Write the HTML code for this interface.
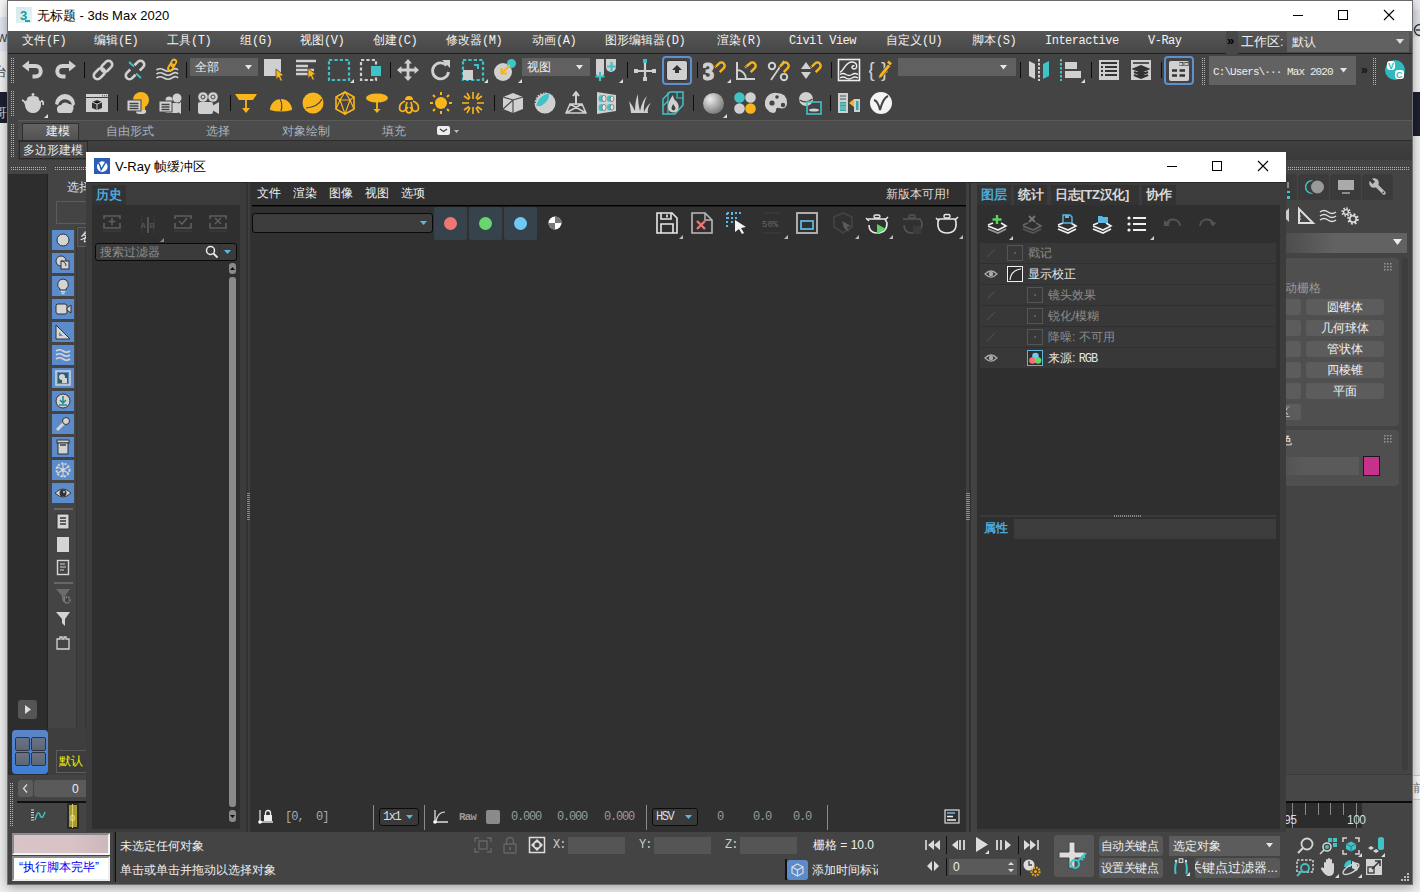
<!DOCTYPE html>
<html><head><meta charset="utf-8">
<style>
*{margin:0;padding:0;box-sizing:border-box}
html,body{width:1420px;height:892px;overflow:hidden;background:#f0f0f0;font-family:"Liberation Sans",sans-serif;position:relative}
.a{position:absolute}
.t{position:absolute;white-space:nowrap;line-height:20px;height:20px}
.m{font-family:'Liberation Mono',monospace;font-size:12px;letter-spacing:-0.5px}
</style></head><body>
<div class="a" style="left:0px;top:0px;width:8px;height:17px;background:#f7f7f7;"></div>
<div class="a" style="left:0px;top:17px;width:8px;height:34px;background:#e2e5ef;"></div>
<div class="t" style="left:-3px;top:28px;font-size:11px;color:#333;font-family:'Liberation Sans',sans-serif;">W.</div>
<div class="a" style="left:0px;top:51px;width:8px;height:41px;background:#f0f0f0;"></div>
<div class="t" style="left:-6px;top:62px;font-size:13px;color:#444;font-family:'Liberation Sans',sans-serif;">台</div>
<div class="a" style="left:0px;top:92px;width:8px;height:31px;background:#1c2030;"></div>
<div class="t" style="left:-6px;top:103px;font-size:13px;color:#ddd;font-family:'Liberation Sans',sans-serif;">哥</div>
<div class="a" style="left:0px;top:123px;width:8px;height:769px;background:#eeeeee;"></div>
<div class="a" style="left:1412px;top:0px;width:8px;height:10px;background:#ececf0;"></div>
<div class="a" style="left:1412px;top:10px;width:8px;height:27px;background:#dfe2ea;"></div>
<svg class="a" style="left:1412px;top:23px;" width="8" height="14" viewBox="0 0 8 14"><circle cx="8" cy="7" r="5.5" stroke="#333" stroke-width="1.4" fill="none"/><path d="M4 7H8" stroke="#333" stroke-width="1.4"/></svg>
<div class="a" style="left:1412px;top:37px;width:8px;height:55px;background:#f0f0f0;"></div>
<div class="a" style="left:1412px;top:92px;width:8px;height:44px;background:#1c2030;"></div>
<div class="a" style="left:1412px;top:136px;width:8px;height:756px;background:#eeeeee;"></div>
<div class="a" style="left:1412px;top:775px;width:8px;height:25px;background:#fafafa;border-top:1px solid #ccc;border-bottom:1px solid #ccc"></div>
<div class="t" style="left:1413px;top:778px;font-size:12px;color:#777;font-family:'Liberation Sans',sans-serif;">前</div>
<div class="a" style="left:0px;top:884px;width:1420px;height:8px;background:#eeeeee;"></div>
<div class="a" style="left:7px;top:0px;width:1406px;height:885px;background:#444;border:1px solid #707070;border-top:none;box-shadow:0 2px 10px rgba(0,0,0,.35)"></div>
<div class="a" style="left:8px;top:0px;width:1404px;height:31px;background:#fff;"></div>
<div class="a" style="left:8px;top:31px;width:1404px;height:22px;background:linear-gradient(#565656,#474747);"></div>
<div class="a" style="left:8px;top:53px;width:1404px;height:1px;background:#1e1e1e;"></div>
<div class="a" style="left:7px;top:0px;width:1406px;height:1px;background:#6a6a6a;"></div>
<div class="a" style="left:16px;top:7px;width:16px;height:16px;background:linear-gradient(135deg,#d2eaee,#e6f3f4)"></div>
<svg class="a" style="left:16px;top:7px;" width="16" height="16" viewBox="0 0 16 16"><text x="4" y="12.5" font-family="Liberation Sans" font-weight="bold" font-size="13" fill="#1a9aa0">3</text><rect x="9" y="13" width="5" height="2" fill="#1aa7ad"/></svg>
<div class="t" style="left:37px;top:6px;font-size:13px;color:#000;font-family:'Liberation Sans',sans-serif;">无标题 - 3ds Max 2020</div>
<div class="a" style="left:1293px;top:15px;width:10px;height:1px;background:#000;"></div>
<div class="a" style="left:1338px;top:10px;width:10px;height:10px;background:transparent;border:1px solid #000"></div>
<svg class="a" style="left:1383px;top:9px;" width="12" height="12" viewBox="0 0 12 12"><path d="M1 1L11 11M11 1L1 11" stroke="#000" stroke-width="1.1"/></svg>
<div class="t" style="left:22px;top:30px;font-size:12px;color:#f2f2f2;font-family:'Liberation Sans',sans-serif;">文件<span class="m">(F)</span></div>
<div class="t" style="left:94px;top:30px;font-size:12px;color:#f2f2f2;font-family:'Liberation Sans',sans-serif;">编辑<span class="m">(E)</span></div>
<div class="t" style="left:167px;top:30px;font-size:12px;color:#f2f2f2;font-family:'Liberation Sans',sans-serif;">工具<span class="m">(T)</span></div>
<div class="t" style="left:240px;top:30px;font-size:12px;color:#f2f2f2;font-family:'Liberation Sans',sans-serif;">组<span class="m">(G)</span></div>
<div class="t" style="left:300px;top:30px;font-size:12px;color:#f2f2f2;font-family:'Liberation Sans',sans-serif;">视图<span class="m">(V)</span></div>
<div class="t" style="left:373px;top:30px;font-size:12px;color:#f2f2f2;font-family:'Liberation Sans',sans-serif;">创建<span class="m">(C)</span></div>
<div class="t" style="left:446px;top:30px;font-size:12px;color:#f2f2f2;font-family:'Liberation Sans',sans-serif;">修改器<span class="m">(M)</span></div>
<div class="t" style="left:532px;top:30px;font-size:12px;color:#f2f2f2;font-family:'Liberation Sans',sans-serif;">动画<span class="m">(A)</span></div>
<div class="t" style="left:605px;top:30px;font-size:12px;color:#f2f2f2;font-family:'Liberation Sans',sans-serif;">图形编辑器<span class="m">(D)</span></div>
<div class="t" style="left:717px;top:30px;font-size:12px;color:#f2f2f2;font-family:'Liberation Sans',sans-serif;">渲染<span class="m">(R)</span></div>
<div class="t" style="left:789px;top:30px;font-size:12px;color:#f2f2f2;font-family:'Liberation Sans',sans-serif;"><span class="m">Civil View</span></div>
<div class="t" style="left:886px;top:30px;font-size:12px;color:#f2f2f2;font-family:'Liberation Sans',sans-serif;">自定义<span class="m">(U)</span></div>
<div class="t" style="left:972px;top:30px;font-size:12px;color:#f2f2f2;font-family:'Liberation Sans',sans-serif;">脚本<span class="m">(S)</span></div>
<div class="t" style="left:1045px;top:30px;font-size:12px;color:#f2f2f2;font-family:'Liberation Sans',sans-serif;"><span class="m">Interactive</span></div>
<div class="t" style="left:1148px;top:30px;font-size:12px;color:#f2f2f2;font-family:'Liberation Sans',sans-serif;"><span class="m">V-Ray</span></div>
<div class="a" style="left:1226px;top:31px;width:12px;height:23px;background:#474747;"></div>
<div class="t" style="left:1227px;top:31px;font-size:13px;color:#000;font-family:'Liberation Sans',sans-serif;"><b>»</b></div>
<div class="t" style="left:1241px;top:32px;font-size:12px;color:#f2f2f2;font-family:'Liberation Sans',sans-serif;font-size:12.5px">工作区:</div>
<div class="a" style="left:1287px;top:32px;width:122px;height:20px;background:#616161;"></div>
<div class="t" style="left:1292px;top:32px;font-size:12px;color:#eee;font-family:'Liberation Sans',sans-serif;">默认</div>
<svg class="a" style="left:1396px;top:39px;" width="8" height="6" viewBox="0 0 8 6"><path d="M0 0H8L4 5Z" fill="#ddd"/></svg>
<div class="a" style="left:8px;top:54px;width:1404px;height:66px;background:#444;"></div>
<div class="a" style="left:11px;top:57px;width:3px;height:27px;background-image:linear-gradient(#444 50%,transparent 50%),linear-gradient(90deg,#b4b4b4 1px,#444 1px,#444 2px,#b4b4b4 2px,#b4b4b4 3px);background-size:3px 2px,3px 2px"></div>
<div class="a" style="left:11px;top:90px;width:3px;height:27px;background-image:linear-gradient(#444 50%,transparent 50%),linear-gradient(90deg,#b4b4b4 1px,#444 1px,#444 2px,#b4b4b4 2px,#b4b4b4 3px);background-size:3px 2px,3px 2px"></div>
<div class="a" style="left:11px;top:123px;width:3px;height:35px;background-image:linear-gradient(#444 50%,transparent 50%),linear-gradient(90deg,#b4b4b4 1px,#444 1px,#444 2px,#b4b4b4 2px,#b4b4b4 3px);background-size:3px 2px,3px 2px"></div>
<svg class="a" style="left:21px;top:58px;" width="24" height="24" viewBox="0 0 24 24"><path d="M1 8L8 2.5V13.5Z" fill="#d0d0d0"/><path d="M7 8H14.5A5.2 5.2 0 0 1 14.5 18.5H11.5" stroke="#d0d0d0" stroke-width="4" fill="none"/></svg>
<svg class="a" style="left:53px;top:58px;" width="24" height="24" viewBox="0 0 24 24"><g transform="translate(24,0) scale(-1,1)"><path d="M1 8L8 2.5V13.5Z" fill="#d0d0d0"/><path d="M7 8H14.5A5.2 5.2 0 0 1 14.5 18.5H11.5" stroke="#d0d0d0" stroke-width="4" fill="none"/></g></svg>
<div class="a" style="left:84px;top:62px;width:1px;height:16px;background:#0e0e0e;"></div>
<svg class="a" style="left:91px;top:58px;" width="24" height="24" viewBox="0 0 24 24"><g transform="rotate(-45 12 12)"><rect x="0.5" y="8.3" width="12.5" height="7.4" rx="3.7" stroke="#d0d0d0" stroke-width="2.6" fill="none"/><rect x="11" y="8.3" width="12.5" height="7.4" rx="3.7" stroke="#d0d0d0" stroke-width="2.6" fill="none"/></g></svg>
<svg class="a" style="left:123px;top:58px;" width="24" height="24" viewBox="0 0 24 24"><g transform="rotate(-45 12 12)"><path d="M9 8.3H4.2A3.7 3.7 0 0 0 4.2 15.7H9" stroke="#d0d0d0" stroke-width="2.6" fill="none"/><path d="M15 8.3H19.8A3.7 3.7 0 0 1 19.8 15.7H15" stroke="#d0d0d0" stroke-width="2.6" fill="none"/></g><path d="M6 4L11 8.5M13 15.5L18 20" stroke="#3ec3c6" stroke-width="1.8"/></svg>
<svg class="a" style="left:155px;top:58px;" width="24" height="24" viewBox="0 0 24 24"><path d="M1.5 12Q5 9.5 9 12T17 12T23 12M1.5 16Q5 13.5 9 16T17 16T23 16M1.5 20Q5 17.5 9 20T17 20T23 20" stroke="#d0d0d0" stroke-width="1.7" fill="none"/><g transform="rotate(-60 17 7)"><rect x="11" y="5" width="7" height="4.4" rx="2.2" stroke="#f9b51c" stroke-width="1.8" fill="none"/><rect x="16" y="5" width="7" height="4.4" rx="2.2" stroke="#f9b51c" stroke-width="1.8" fill="none"/></g></svg>
<div class="a" style="left:186px;top:62px;width:1px;height:16px;background:#0e0e0e;"></div>
<div class="a" style="left:190px;top:58px;width:68px;height:18px;background:#606060;"></div>
<div class="t" style="left:195px;top:57px;font-size:12px;color:#eee;font-family:'Liberation Sans',sans-serif;">全部</div>
<svg class="a" style="left:245px;top:65px;" width="7" height="5" viewBox="0 0 7 5"><path d="M0 0H7L3.5 4.5Z" fill="#e6e6e6"/></svg>
<svg class="a" style="left:261px;top:58px;" width="24" height="24" viewBox="0 0 24 24"><rect x="3" y="1" width="17" height="17" fill="#d0d0d0"/><path d="M15 11L23 17.5L19.5 18L21.5 22.5L19.5 23.2L17.5 19L15 21.5Z" fill="#f9b51c" stroke="#444" stroke-width=".8"/></svg>
<svg class="a" style="left:294px;top:58px;" width="24" height="24" viewBox="0 0 24 24"><path d="M2 3H22M2 8H14M2 12H20M2 16H14" stroke="#d0d0d0" stroke-width="2.4"/><path d="M14 10L22 16.5L18.5 17L20.5 21.5L18.5 22.2L16.5 18L14 20.5Z" fill="#f9b51c" stroke="#444" stroke-width=".8"/></svg>
<svg class="a" style="left:327px;top:58px;" width="24" height="24" viewBox="0 0 24 24"><rect x="2" y="2" width="20" height="20" stroke="#3ec3c6" stroke-width="2.2" fill="none" stroke-dasharray="3.2 2.2"/></svg>
<svg class="a" style="left:350px;top:79px;" width="4" height="4" viewBox="0 0 4 4"><path d="M4 0V4H0Z" fill="#ddd"/></svg>
<svg class="a" style="left:359px;top:58px;" width="24" height="24" viewBox="0 0 24 24"><rect x="2" y="2" width="15" height="20" stroke="#d0d0d0" stroke-width="2.2" fill="none" stroke-dasharray="3.2 2.2"/><rect x="12" y="8" width="10" height="10" fill="#3ec3c6"/></svg>
<div class="a" style="left:390px;top:62px;width:1px;height:16px;background:#0e0e0e;"></div>
<svg class="a" style="left:396px;top:58px;" width="24" height="24" viewBox="0 0 24 24"><path d="M12 1L16 5.5H13.4V10.6H18.5V8L23 12L18.5 16V13.4H13.4V18.5H16L12 23L8 18.5H10.6V13.4H5.5V16L1 12L5.5 8V10.6H10.6V5.5H8Z" fill="#d0d0d0"/></svg>
<svg class="a" style="left:429px;top:58px;" width="24" height="24" viewBox="0 0 24 24"><path d="M17.5 7.5A8 8 0 1 0 19.5 14" stroke="#d0d0d0" stroke-width="2.8" fill="none"/><path d="M13 2H21V10Z" fill="#d0d0d0"/></svg>
<svg class="a" style="left:461px;top:58px;" width="24" height="24" viewBox="0 0 24 24"><rect x="2" y="2" width="20" height="20" stroke="#3ec3c6" stroke-width="2.2" fill="none" stroke-dasharray="3.2 2.2"/><rect x="2" y="12" width="10" height="10" fill="#d0d0d0"/><path d="M13 7H17V11" stroke="#3ec3c6" stroke-width="2" fill="none"/></svg>
<svg class="a" style="left:484px;top:79px;" width="4" height="4" viewBox="0 0 4 4"><path d="M4 0V4H0Z" fill="#ddd"/></svg>
<svg class="a" style="left:493px;top:58px;" width="24" height="24" viewBox="0 0 24 24"><circle cx="10" cy="14" r="9" fill="#d0d0d0"/><circle cx="18.5" cy="5.5" r="4.5" fill="#3ec3c6"/><path d="M17 7L9 15M8.5 10V15.5H14" stroke="#f9b51c" stroke-width="2.2" fill="none"/></svg>
<svg class="a" style="left:518px;top:79px;" width="4" height="4" viewBox="0 0 4 4"><path d="M4 0V4H0Z" fill="#ddd"/></svg>
<div class="a" style="left:522px;top:58px;width:68px;height:18px;background:#606060;"></div>
<div class="t" style="left:527px;top:57px;font-size:12px;color:#eee;font-family:'Liberation Sans',sans-serif;">视图</div>
<svg class="a" style="left:576px;top:65px;" width="7" height="5" viewBox="0 0 7 5"><path d="M0 0H7L3.5 4.5Z" fill="#e6e6e6"/></svg>
<svg class="a" style="left:594px;top:58px;" width="24" height="24" viewBox="0 0 24 24"><path d="M2 1H10V15A4 4 0 0 1 2 15Z" fill="#d0d0d0"/><path d="M12 1H22V9A5 5 0 0 1 12 9Z" fill="#d0d0d0"/><path d="M6 14V23M1.5 18.5H10.5M17.5 4V13M13 8.5H22" stroke="#3ec3c6" stroke-width="2.2"/></svg>
<svg class="a" style="left:619px;top:79px;" width="4" height="4" viewBox="0 0 4 4"><path d="M4 0V4H0Z" fill="#ddd"/></svg>
<div class="a" style="left:627px;top:62px;width:1px;height:16px;background:#0e0e0e;"></div>
<svg class="a" style="left:633px;top:58px;" width="24" height="24" viewBox="0 0 24 24"><path d="M12 4V22M2 13H22" stroke="#d0d0d0" stroke-width="2.2"/><rect x="10" y="1" width="4" height="4" fill="#3ec3c6"/><rect x="1" y="11" width="4" height="4" fill="#d0d0d0"/><rect x="19" y="11" width="4" height="4" fill="#d0d0d0"/><rect x="10" y="19" width="4" height="4" fill="#d0d0d0"/></svg>
<div class="a" style="left:662px;top:56px;width:30px;height:29px;border:2px solid #5e8fd0;border-radius:4px;background:#444"></div>
<div class="a" style="left:666px;top:60px;width:22px;height:21px;background:#d0d0d0;border-radius:3px;border:1px solid #333"></div>
<svg class="a" style="left:671px;top:64px;" width="12" height="10" viewBox="0 0 12 10"><path d="M6 1L11 6H8V9H4V6H1Z" fill="#333"/></svg>
<div class="a" style="left:697px;top:62px;width:1px;height:16px;background:#0e0e0e;"></div>
<svg class="a" style="left:703px;top:58px;" width="24" height="24" viewBox="0 0 24 24"><text x="-1.5" y="21.5" font-family="Liberation Sans" font-weight="bold" font-size="23" fill="#d0d0d0" stroke="#d0d0d0" stroke-width="0.9">3</text><path d="M12 9.5L16 5.5A3.3 3.3 0 0 1 20.7 10.2L16.7 14.2" stroke="#f9b51c" stroke-width="2.4" fill="none"/><path d="M11.2 7.2L13.8 9.8M14.4 12.9L17 15.5" stroke="#444" stroke-width="0.9"/></svg>
<svg class="a" style="left:727px;top:79px;" width="4" height="4" viewBox="0 0 4 4"><path d="M4 0V4H0Z" fill="#ddd"/></svg>
<svg class="a" style="left:734px;top:58px;" width="24" height="24" viewBox="0 0 24 24"><path d="M3 4V21H21M3 12A9 9 0 0 1 12 21" stroke="#d0d0d0" stroke-width="2" fill="none"/><path d="M11 9.5L16 5.5A3.3 3.3 0 0 1 20.7 10.2L16.7 14.2" stroke="#f9b51c" stroke-width="2.4" fill="none"/><path d="M10.2 7.2L13.8 9.8M14.4 12.9L17 15.5" stroke="#444" stroke-width="0.9"/></svg>
<svg class="a" style="left:767px;top:58px;" width="24" height="24" viewBox="0 0 24 24"><circle cx="5" cy="8" r="3.2" stroke="#d0d0d0" stroke-width="2" fill="none"/><circle cx="17" cy="19" r="3.2" stroke="#d0d0d0" stroke-width="2" fill="none"/><path d="M4 22L17 3" stroke="#d0d0d0" stroke-width="1.8"/><path d="M12 9.5L16 5.5A3.3 3.3 0 0 1 20.7 10.2L16.7 14.2" stroke="#f9b51c" stroke-width="2.4" fill="none"/><path d="M11.2 7.2L13.8 9.8M14.4 12.9L17 15.5" stroke="#444" stroke-width="0.9"/></svg>
<svg class="a" style="left:799px;top:58px;" width="24" height="24" viewBox="0 0 24 24"><path d="M2 11L7 4L12 11ZM2 14H12L7 21Z" fill="#d0d0d0"/><path d="M12 9.5L16 5.5A3.3 3.3 0 0 1 20.7 10.2L16.7 14.2" stroke="#f9b51c" stroke-width="2.4" fill="none"/><path d="M11.2 7.2L13.8 9.8M14.4 12.9L17 15.5" stroke="#444" stroke-width="0.9"/></svg>
<div class="a" style="left:831px;top:62px;width:1px;height:16px;background:#0e0e0e;"></div>
<svg class="a" style="left:837px;top:58px;" width="24" height="24" viewBox="0 0 24 24"><rect x="1.5" y="1.5" width="21" height="21" stroke="#eee" stroke-width="1.6" fill="none"/><path d="M3 14C6 14 8 5 14 4C18.5 3.5 20.5 6.5 19.5 9.5C18.5 11.5 15.5 11.5 15 9.5C14.7 8 16.5 7.3 17.3 8.3M3 16.5Q6 14.5 9 16.5T15 16.5T21 16.5M3 20Q6 18 9 20T15 20T21 20" stroke="#eee" stroke-width="1.5" fill="none"/></svg>
<svg class="a" style="left:869px;top:58px;" width="24" height="24" viewBox="0 0 24 24"><text x="-1" y="19" font-family="Liberation Sans" font-size="20" fill="#d0d0d0">{</text><text x="12" y="19" font-family="Liberation Sans" font-size="20" fill="#d0d0d0">}</text><path d="M10 17L19 6L21.5 8.5L12.5 19.5L9.5 20.5Z" fill="#f9b51c" stroke="#444" stroke-width=".8"/><path d="M18 4.5L20 2.5L23 5.5L21 7.5Z" fill="#f9b51c"/></svg>
<div class="a" style="left:898px;top:58px;width:118px;height:18px;background:#606060;"></div>
<svg class="a" style="left:1000px;top:65px;" width="7" height="5" viewBox="0 0 7 5"><path d="M0 0H7L3.5 4.5Z" fill="#e6e6e6"/></svg>
<div class="a" style="left:1020px;top:62px;width:1px;height:16px;background:#0e0e0e;"></div>
<svg class="a" style="left:1027px;top:58px;" width="24" height="24" viewBox="0 0 24 24"><path d="M2 3L8 6V21L2 18Z" fill="#d0d0d0"/><path d="M22 3L16 6V21L22 18Z" fill="#3ec3c6"/><path d="M12 1V23" stroke="#d0d0d0" stroke-width="2" stroke-dasharray="2.5 1.5"/></svg>
<svg class="a" style="left:1058px;top:58px;" width="24" height="24" viewBox="0 0 24 24"><path d="M3 1V23" stroke="#3ec3c6" stroke-width="2" stroke-dasharray="2.5 1.5"/><rect x="7" y="4" width="12" height="7" fill="#d0d0d0"/><rect x="7" y="13" width="16" height="7" fill="#d0d0d0"/></svg>
<svg class="a" style="left:1081px;top:79px;" width="4" height="4" viewBox="0 0 4 4"><path d="M4 0V4H0Z" fill="#ddd"/></svg>
<div class="a" style="left:1091px;top:62px;width:1px;height:16px;background:#0e0e0e;"></div>
<svg class="a" style="left:1097px;top:58px;" width="24" height="24" viewBox="0 0 24 24"><rect x="2" y="2" width="20" height="20" fill="#d0d0d0"/><path d="M4 5H20M4 9H6M8 9H20M4 13H6M8 13H20M4 17H6M8 17H20" stroke="#333" stroke-width="2.2"/></svg>
<svg class="a" style="left:1129px;top:58px;" width="24" height="24" viewBox="0 0 24 24"><rect x="2" y="2" width="20" height="20" fill="#d0d0d0"/><path d="M4 5H20" stroke="#333" stroke-width="1.6"/><path d="M5 11L12 8L19 11L12 14Z M5 14L12 17L19 14 M5 17L12 20L19 17" stroke="#333" stroke-width="2" fill="#333"/></svg>
<div class="a" style="left:1161px;top:62px;width:1px;height:16px;background:#0e0e0e;"></div>
<div class="a" style="left:1164px;top:56px;width:30px;height:29px;border:2px solid #5e8fd0;border-radius:4px;background:#444"></div>
<svg class="a" style="left:1167px;top:59px;" width="24" height="23" viewBox="0 0 24 23"><rect x="2" y="2" width="20" height="20" rx="2" fill="#d0d0d0"/><rect x="12.5" y="3" width="4" height="4" fill="#333"/><rect x="17.5" y="3" width="4" height="4" fill="#333"/><rect x="12.5" y="3.8" width="3" height="2.6" fill="#d0d0d0"/><rect x="17.8" y="3.8" width="3" height="2.6" fill="#d0d0d0"/><path d="M5 11.5H10M12.5 11.5H18M5 16.5H10M12.5 16.5H18" stroke="#333" stroke-width="2.4"/></svg>
<div class="a" style="left:1202px;top:57px;width:3px;height:28px;background-image:linear-gradient(#444 50%,transparent 50%),linear-gradient(90deg,#b4b4b4 1px,#444 1px,#444 2px,#b4b4b4 2px,#b4b4b4 3px);background-size:3px 2px,3px 2px"></div>
<div class="a" style="left:1209px;top:56px;width:147px;height:29px;background:#626262;"></div>
<svg class="a" style="left:1340px;top:68px;" width="7" height="5" viewBox="0 0 7 5"><path d="M0 0H7L3.5 4.5Z" fill="#e6e6e6"/></svg>
<div class="t" style="left:1213px;top:62px;font-size:11px;color:#eee;font-family:'Liberation Mono',monospace;letter-spacing:-0.9px">C:\Users\··· Max 2020</div>
<div class="t" style="left:1361px;top:60px;font-size:12px;color:#111;font-family:'Liberation Sans',sans-serif;"><b>»</b></div>
<div class="a" style="left:1373px;top:57px;width:3px;height:28px;background-image:linear-gradient(#444 50%,transparent 50%),linear-gradient(90deg,#b4b4b4 1px,#444 1px,#444 2px,#b4b4b4 2px,#b4b4b4 3px);background-size:3px 2px,3px 2px"></div>
<svg class="a" style="left:1383px;top:58px;" width="24" height="24" viewBox="0 0 24 24"><circle cx="12" cy="12" r="10" fill="#2fb8bd"/><rect x="4" y="3" width="8" height="9" rx="3" fill="#fff"/><text x="5" y="11" font-family="Liberation Sans" font-weight="bold" font-size="9" fill="#2fb8bd">V</text><rect x="12" y="12" width="9" height="9" rx="3" fill="#fff"/><text x="13" y="20" font-family="Liberation Sans" font-weight="bold" font-size="9" fill="#2fb8bd">C</text></svg>
<svg class="a" style="left:21px;top:91px;" width="24" height="24" viewBox="0 0 24 24"><path d="M4 10Q4 21 12 22Q20 21 20 10Z" fill="#d0d0d0"/><circle cx="12" cy="14" r="8" fill="#d0d0d0"/><path d="M6 8H18Q18 5 12 5Q6 5 6 8Z" fill="#d0d0d0"/><rect x="10.5" y="2" width="3" height="3" rx="1.5" fill="#d0d0d0"/><path d="M1 9Q4 10 5 14M20 10Q23 10 22 14" stroke="#d0d0d0" stroke-width="1.8" fill="none"/></svg>
<svg class="a" style="left:44px;top:114px;" width="4" height="4" viewBox="0 0 4 4"><path d="M4 0V4H0Z" fill="#ddd"/></svg>
<svg class="a" style="left:53px;top:91px;" width="24" height="24" viewBox="0 0 24 24"><path d="M2 13A10 10 0 0 1 22 13L19 17A7 7 0 0 0 5 14Z" fill="#d0d0d0"/><path d="M4 19A4 4 0 0 1 8 14A5 5 0 0 1 16 13A4 4 0 0 1 20 19A3.5 3.5 0 0 1 16 22H8A3.5 3.5 0 0 1 4 19Z" fill="#d0d0d0"/></svg>
<svg class="a" style="left:85px;top:91px;" width="24" height="24" viewBox="0 0 24 24"><rect x="1" y="3" width="22" height="18" fill="#d0d0d0"/><path d="M1 6.5H23" stroke="#444" stroke-width="1"/><path d="M17 4.8H22" stroke="#444" stroke-width="1" stroke-dasharray="1 1"/><path d="M7 11L12 9L17 11V17L12 19L7 17Z" fill="#333"/><path d="M12 13V19M7 11L12 13L17 11" stroke="#d0d0d0" stroke-width="1"/></svg>
<div class="a" style="left:117px;top:95px;width:1px;height:16px;background:#0e0e0e;"></div>
<svg class="a" style="left:126px;top:91px;" width="24" height="24" viewBox="0 0 24 24"><circle cx="15" cy="9" r="8" fill="#f9b51c"/><path d="M11 14H19V19H11Z" fill="#f9b51c"/><path d="M10 19H20V21Q20 23 15 23Q10 23 10 21Z" fill="#d0d0d0"/><rect x="1" y="9" width="14" height="11" fill="#d0d0d0" stroke="#444" stroke-width="1"/><path d="M3.5 12.5H12.5M3.5 15H12.5M3.5 17.5H12.5" stroke="#444" stroke-width="1.4"/></svg>
<svg class="a" style="left:158px;top:91px;" width="24" height="24" viewBox="0 0 24 24"><circle cx="19" cy="7" r="4.5" fill="#d0d0d0"/><circle cx="11" cy="9" r="3.5" fill="#d0d0d0"/><rect x="7" y="12" width="14" height="10" rx="2" fill="#d0d0d0"/><path d="M17 15L23 11V23L17 19Z" fill="#d0d0d0"/><rect x="1" y="10" width="13" height="11" fill="#d0d0d0" stroke="#444" stroke-width="1"/><path d="M3.5 13.5H11.5M3.5 16H11.5M3.5 18.5H11.5" stroke="#444" stroke-width="1.4"/></svg>
<div class="a" style="left:189px;top:95px;width:1px;height:16px;background:#0e0e0e;"></div>
<svg class="a" style="left:196px;top:91px;" width="24" height="24" viewBox="0 0 24 24"><circle cx="7" cy="6" r="4.8" fill="#d0d0d0"/><circle cx="17" cy="6" r="4.8" fill="#d0d0d0"/><circle cx="7" cy="6" r="2" stroke="#444" stroke-width="1" fill="none"/><circle cx="17" cy="6" r="2" stroke="#444" stroke-width="1" fill="none"/><rect x="2" y="11" width="15" height="12" rx="2" fill="#d0d0d0"/><path d="M16 15L23 11V23L16 19Z" fill="#d0d0d0"/></svg>
<div class="a" style="left:230px;top:95px;width:1px;height:16px;background:#0e0e0e;"></div>
<svg class="a" style="left:234px;top:91px;" width="24" height="24" viewBox="0 0 24 24"><path d="M1 3H23L19 9H5Z" fill="#f9b51c"/><path d="M12 8V19" stroke="#f9b51c" stroke-width="1.8"/><path d="M8 17L12 22L16 17Z" fill="#f9b51c"/></svg>
<svg class="a" style="left:269px;top:91px;" width="24" height="24" viewBox="0 0 24 24"><path d="M1 19A11 11 0 0 1 23 19Q12 22 1 19Z" fill="#f9b51c"/><path d="M11 8Q14 13 12 20" stroke="#444" stroke-width="1.2" fill="none"/></svg>
<svg class="a" style="left:301px;top:91px;" width="24" height="24" viewBox="0 0 24 24"><circle cx="12" cy="12" r="10.5" fill="#f9b51c"/><path d="M21 8Q17 16 5 17" stroke="#444" stroke-width="1.2" fill="none"/></svg>
<svg class="a" style="left:333px;top:91px;" width="24" height="24" viewBox="0 0 24 24"><path d="M12 1L21 6V18L12 23L3 18V6Z" stroke="#f9b51c" stroke-width="1.6" fill="none"/><path d="M12 1L7 9H17Z M7 9L3 18M17 9L21 18M7 9L12 23L17 9M3 6L7 9M21 6L17 9" stroke="#f9b51c" stroke-width="1.2" fill="none"/></svg>
<svg class="a" style="left:365px;top:91px;" width="24" height="24" viewBox="0 0 24 24"><ellipse cx="12" cy="7" rx="11" ry="4.5" fill="#f9b51c"/><path d="M12 9V21" stroke="#f9b51c" stroke-width="1.8"/><path d="M8.5 18L12 22L15.5 18Z" fill="#f9b51c"/></svg>
<svg class="a" style="left:397px;top:91px;" width="24" height="24" viewBox="0 0 24 24"><path d="M8 9A4 4 0 0 1 16 9Z" fill="#f9b51c"/><path d="M8 10Q1 13 3 19Q6 23 11 16M16 10Q23 13 21 19Q18 23 13 16M10 11Q7 21 12 22Q17 21 14 11" stroke="#f9b51c" stroke-width="1.7" fill="none"/></svg>
<svg class="a" style="left:429px;top:91px;" width="24" height="24" viewBox="0 0 24 24"><circle cx="12" cy="12" r="6" fill="#f9b51c"/><path d="M12 1V4M12 20V23M1 12H4M20 12H23M4 4L6 6M18 18L20 20M4 20L6 18M18 6L20 4" stroke="#f9b51c" stroke-width="2"/></svg>
<svg class="a" style="left:461px;top:91px;" width="24" height="24" viewBox="0 0 24 24"><path d="M12 1V8M12 16V23M1 12H8M16 12H23M3 5L8 8.5M16 15.5L21 19M3 19L8 15.5M16 8.5L21 5M6 2L9 7.5M15 16.5L18 22M6 22L9 16.5M15 7.5L18 2" stroke="#f9b51c" stroke-width="1.6"/></svg>
<div class="a" style="left:494px;top:95px;width:1px;height:16px;background:#0e0e0e;"></div>
<svg class="a" style="left:501px;top:91px;" width="24" height="24" viewBox="0 0 24 24"><path d="M2 6L12 2L22 6V18L12 22L2 18Z" fill="#d0d0d0"/><path d="M2 6L12 9L22 6M12 9V22M2 18L12 9" stroke="#444" stroke-width="1.1" fill="none"/></svg>
<svg class="a" style="left:533px;top:91px;" width="24" height="24" viewBox="0 0 24 24"><circle cx="12" cy="12" r="10.5" fill="#d0d0d0"/><path d="M3 15Q5 5 16 2Q17 10 8 15Z" fill="#3ec3c6"/><path d="M2 12A10 10 0 0 1 12 2" stroke="#444" stroke-width="1.5" stroke-dasharray="1.5 1.5" fill="none"/></svg>
<svg class="a" style="left:564px;top:91px;" width="24" height="24" viewBox="0 0 24 24"><path d="M2 22L6 13H18L22 22Z M6 13L22 22M18 13L2 22" stroke="#d0d0d0" stroke-width="1.5" fill="none"/><path d="M12 2V14M9 5L12 1L15 5" stroke="#d0d0d0" stroke-width="2" fill="none"/></svg>
<svg class="a" style="left:596px;top:91px;" width="24" height="24" viewBox="0 0 24 24"><path d="M1 1L20 4V20L1 23Z" fill="#d0d0d0"/><g fill="#3ec3c6"><ellipse cx="5.5" cy="7.5" rx="3" ry="3.6"/><ellipse cx="13.5" cy="7.8" rx="2.6" ry="3.2"/><ellipse cx="5.5" cy="16.5" rx="3" ry="3.6"/><ellipse cx="13.5" cy="16.2" rx="2.6" ry="3.2"/></g><g fill="#e6e6e6" stroke="#555" stroke-width=".6"><ellipse cx="8" cy="7.5" rx="2" ry="3.2"/><ellipse cx="16" cy="7.8" rx="1.8" ry="2.8"/><ellipse cx="8" cy="16.5" rx="2" ry="3.2"/><ellipse cx="16" cy="16.2" rx="1.8" ry="2.8"/></g></svg>
<svg class="a" style="left:628px;top:91px;" width="24" height="24" viewBox="0 0 24 24"><path d="M3 22Q2 14 1 10Q5 15 7 20Q7 10 10 3Q10 13 12 20Q14 10 19 5Q15 13 16 21Q19 14 23 12Q19 17 20 22Z" fill="#d0d0d0"/></svg>
<svg class="a" style="left:661px;top:91px;" width="24" height="24" viewBox="0 0 24 24"><path d="M2 8L9 1H22V14L14 23H2Z" stroke="#3ec3c6" stroke-width="1.5" fill="none"/><path d="M16 1V7H22M2 15L7 10M7 1V23" stroke="#3ec3c6" stroke-width="1.2" fill="none"/><path d="M12.5 21.5Q6.5 21 7 15Q7.5 10 12 4Q12.5 8.5 15 10Q18.5 13.5 17.5 17.5Q16.5 21.5 12.5 21.5Z" fill="#d0d0d0"/><path d="M12.5 19.5Q10.2 19.2 10.5 16.8Q11 14.8 12.3 13Q13 15 14.2 16Q15 19 12.5 19.5Z" fill="#444"/></svg>
<div class="a" style="left:693px;top:95px;width:1px;height:16px;background:#0e0e0e;"></div>
<div class="a" style="left:703px;top:93px;width:21px;height:21px;border-radius:50%;background:radial-gradient(circle at 35% 30%,#eee,#999 55%,#5a5a5a)"></div>
<svg class="a" style="left:723px;top:114px;" width="4" height="4" viewBox="0 0 4 4"><path d="M4 0V4H0Z" fill="#ddd"/></svg>
<svg class="a" style="left:733px;top:91px;" width="24" height="24" viewBox="0 0 24 24"><circle cx="6.5" cy="6.5" r="5.3" fill="#3ec3c6"/><circle cx="17.5" cy="6.5" r="5.3" fill="#d0d0d0"/><circle cx="6.5" cy="17.5" r="5.3" fill="#d0d0d0"/><circle cx="17.5" cy="17.5" r="5.3" fill="#f9b51c"/></svg>
<svg class="a" style="left:765px;top:91px;" width="24" height="24" viewBox="0 0 24 24"><path d="M12 2A10 10 0 0 0 8 22Q11 22 11 19Q11 16 14 17Q22 19 22 12Q22 2 12 2Z" fill="#d0d0d0"/><circle cx="7" cy="12" r="2.6" fill="#444"/><circle cx="12" cy="6" r="1.8" fill="#444"/><circle cx="18" cy="14" r="2.2" fill="#444"/></svg>
<svg class="a" style="left:798px;top:91px;" width="24" height="24" viewBox="0 0 24 24"><circle cx="8" cy="8" r="7" fill="#d0d0d0"/><path d="M1.5 9Q8 13 14.5 8" stroke="#444" stroke-width="1.2" fill="none"/><rect x="9" y="11" width="14" height="12" stroke="#3ec3c6" stroke-width="1.6" fill="none"/><ellipse cx="16" cy="19" rx="5" ry="1.6" fill="#d0d0d0"/></svg>
<div class="a" style="left:830px;top:95px;width:1px;height:16px;background:#0e0e0e;"></div>
<svg class="a" style="left:837px;top:91px;" width="24" height="24" viewBox="0 0 24 24"><rect x="1" y="2" width="10" height="20" fill="#d0d0d0"/><path d="M3 5H9M3 8H9" stroke="#555" stroke-width="1"/><rect x="3" y="11" width="6" height="9" fill="#3aa"/><path d="M3 13H9M3 16H9M3 18H9" stroke="#d0d0d0" stroke-width=".7"/><path d="M12 12L17 8V16Z" fill="#f9b51c"/><rect x="17" y="8" width="6" height="13" fill="#d0d0d0"/><rect x="19" y="10" width="2.5" height="9" fill="#3aa"/></svg>
<svg class="a" style="left:869px;top:91px;" width="24" height="24" viewBox="0 0 24 24"><circle cx="12" cy="12" r="11" fill="#f4f4f4"/><path d="M5 9Q9 10 11 19Q14 7 19 5" stroke="#444" stroke-width="2" fill="none"/></svg>
<div class="a" style="left:18px;top:120px;width:1394px;height:21px;background:#4b4b4b;border-top:1px solid #5a5a5a"></div>
<div class="a" style="left:22px;top:123px;width:57px;height:18px;background:linear-gradient(#646464,#505050);border:1px solid #2e2e2e;border-bottom:none"></div>
<div class="t" style="left:46px;top:121px;font-size:12px;color:#f0f0f0;font-family:'Liberation Sans',sans-serif;">建模</div>
<div class="t" style="left:106px;top:121px;font-size:12px;color:#a9b4c0;font-family:'Liberation Sans',sans-serif;">自由形式</div>
<div class="t" style="left:206px;top:121px;font-size:12px;color:#a9b4c0;font-family:'Liberation Sans',sans-serif;">选择</div>
<div class="t" style="left:282px;top:121px;font-size:12px;color:#a9b4c0;font-family:'Liberation Sans',sans-serif;">对象绘制</div>
<div class="t" style="left:382px;top:121px;font-size:12px;color:#a9b4c0;font-family:'Liberation Sans',sans-serif;">填充</div>
<div class="a" style="left:18px;top:140px;width:1394px;height:1px;background:#2c2c2c;"></div>
<div class="a" style="left:18px;top:141px;width:1394px;height:19px;background:linear-gradient(#404040,#3a3a3a);"></div>
<svg class="a" style="left:436px;top:125px;" width="24" height="12" viewBox="0 0 24 12"><rect x="1" y="1" width="13" height="9" rx="2" fill="#eee"/><path d="M4 4L7.5 6.5L11 4" stroke="#444" stroke-width="1.4" fill="none"/><path d="M18 5H23L20.5 8Z" fill="#bbb"/></svg>
<div class="a" style="left:19px;top:141px;width:69px;height:18px;background:#474747;border:1px solid #2a2a2a"></div>
<div class="t" style="left:23px;top:140px;font-size:12px;color:#e6e6e6;font-family:'Liberation Sans',sans-serif;">多边形建模</div>
<div class="a" style="left:8px;top:160px;width:1404px;height:14px;background:#444;"></div>
<div class="a" style="left:10px;top:167px;width:36px;height:3px;background-image:linear-gradient(90deg,#444 50%,transparent 50%),linear-gradient(#b4b4b4 1px,#444 1px,#444 2px,#b4b4b4 2px,#b4b4b4 3px);background-size:2px 3px,2px 3px"></div>
<div class="a" style="left:54px;top:167px;width:32px;height:3px;background-image:linear-gradient(90deg,#444 50%,transparent 50%),linear-gradient(#b4b4b4 1px,#444 1px,#444 2px,#b4b4b4 2px,#b4b4b4 3px);background-size:2px 3px,2px 3px"></div>
<div class="a" style="left:8px;top:174px;width:40px;height:601px;background:#2d2d2d;"></div>
<div class="a" style="left:47px;top:174px;width:1px;height:554px;background:#222;"></div>
<div class="a" style="left:48px;top:174px;width:38px;height:658px;background:#444;"></div>
<div class="a" style="left:76px;top:226px;width:1px;height:502px;background:#363636;"></div>
<div class="a" style="left:77px;top:226px;width:9px;height:502px;background:#3e3e3e;"></div>
<div class="a" style="left:85px;top:226px;width:1px;height:502px;background:#333;"></div>
<div class="t" style="left:67px;top:177px;font-size:12px;color:#d8e8f8;font-family:'Liberation Sans',sans-serif;">选择</div>
<div class="a" style="left:56px;top:201px;width:30px;height:23px;background:#444;border:1px solid #5c5c5c;border-right:none"></div>
<div class="a" style="left:77px;top:227px;width:9px;height:20px;background:#444;border:1px solid #5c5c5c;border-right:none"></div>
<div class="t" style="left:80px;top:227px;font-size:12px;color:#eee;font-family:'Liberation Sans',sans-serif;">名</div>
<div class="a" style="left:52px;top:230px;width:22px;height:20px;background:#5b8bcb;"></div>
<div class="a" style="left:52px;top:253px;width:22px;height:20px;background:#5b8bcb;"></div>
<div class="a" style="left:52px;top:276px;width:22px;height:20px;background:#5b8bcb;"></div>
<div class="a" style="left:52px;top:299px;width:22px;height:20px;background:#5b8bcb;"></div>
<div class="a" style="left:52px;top:322px;width:22px;height:20px;background:#5b8bcb;"></div>
<div class="a" style="left:52px;top:345px;width:22px;height:20px;background:#5b8bcb;"></div>
<div class="a" style="left:52px;top:368px;width:22px;height:20px;background:#5b8bcb;"></div>
<div class="a" style="left:52px;top:391px;width:22px;height:20px;background:#5b8bcb;"></div>
<div class="a" style="left:52px;top:414px;width:22px;height:20px;background:#5b8bcb;"></div>
<div class="a" style="left:52px;top:437px;width:22px;height:20px;background:#5b8bcb;"></div>
<div class="a" style="left:52px;top:460px;width:22px;height:20px;background:#5b8bcb;"></div>
<div class="a" style="left:52px;top:483px;width:22px;height:20px;background:#5b8bcb;"></div>
<svg class="a" style="left:52px;top:230px;" width="22" height="20" viewBox="0 0 22 20"><circle cx="11" cy="10" r="6" fill="#d4d4d4" stroke="#333" stroke-width="1"/></svg>
<svg class="a" style="left:52px;top:253px;" width="22" height="20" viewBox="0 0 22 20"><circle cx="9" cy="8" r="5" fill="#d4d4d4" stroke="#333" stroke-width="1"/><rect x="9" y="8" width="8" height="8" fill="#d4d4d4" stroke="#333" stroke-width="1"/><path d="M9 8A5 5 0 0 1 14 13" stroke="#333" fill="none" stroke-width="1"/></svg>
<svg class="a" style="left:52px;top:276px;" width="22" height="20" viewBox="0 0 22 20"><path d="M11 3A5.5 5.5 0 0 1 14 13V14H8V13A5.5 5.5 0 0 1 11 3Z" fill="#d4d4d4" stroke="#333" stroke-width="1"/><path d="M8.5 15.5H13.5M9.5 17.5H12.5" stroke="#d4d4d4" stroke-width="1.4"/></svg>
<svg class="a" style="left:52px;top:299px;" width="22" height="20" viewBox="0 0 22 20"><rect x="4" y="5" width="11" height="10" rx="2" fill="#d4d4d4" stroke="#333" stroke-width="1"/><path d="M15 9L19 6V14L15 11Z" fill="#d4d4d4" stroke="#333" stroke-width="1"/></svg>
<svg class="a" style="left:52px;top:322px;" width="22" height="20" viewBox="0 0 22 20"><path d="M4 3L18 17H4Z" fill="#d4d4d4" stroke="#333" stroke-width="1"/><path d="M7 10L11 14H7Z" fill="#5b8bcb"/></svg>
<svg class="a" style="left:52px;top:345px;" width="22" height="20" viewBox="0 0 22 20"><path d="M4 6Q7.5 3.5 11 6T18 6M4 10Q7.5 7.5 11 10T18 10M4 14Q7.5 11.5 11 14T18 14" stroke="#d4d4d4" stroke-width="1.6" fill="none"/></svg>
<svg class="a" style="left:52px;top:368px;" width="22" height="20" viewBox="0 0 22 20"><rect x="4" y="3" width="14" height="14" fill="none" stroke="#d4d4d4" stroke-width="1.5"/><rect x="6" y="5" width="10" height="10" fill="#2a6060"/><circle cx="10" cy="9" r="3" fill="#d4d4d4"/><rect x="10" y="10" width="5" height="5" fill="#d4d4d4"/></svg>
<svg class="a" style="left:52px;top:391px;" width="22" height="20" viewBox="0 0 22 20"><circle cx="11" cy="10" r="7" fill="#d4d4d4" stroke="#333" stroke-width="1"/><path d="M11 5V11M8 9L11 12L14 9M7 14H15" stroke="#2a8a8a" stroke-width="1.6" fill="none"/></svg>
<svg class="a" style="left:52px;top:414px;" width="22" height="20" viewBox="0 0 22 20"><path d="M5 16L12 9" stroke="#d4d4d4" stroke-width="3"/><circle cx="14" cy="7" r="3.5" fill="#d4d4d4" stroke="#333" stroke-width="1"/></svg>
<svg class="a" style="left:52px;top:437px;" width="22" height="20" viewBox="0 0 22 20"><rect x="5" y="3" width="12" height="3" fill="#d4d4d4" stroke="#333" stroke-width="1"/><rect x="6" y="6" width="10" height="11" fill="#d4d4d4" stroke="#333" stroke-width="1"/><path d="M8 8H14" stroke="#333" stroke-width="1.4"/></svg>
<svg class="a" style="left:52px;top:460px;" width="22" height="20" viewBox="0 0 22 20"><circle cx="11" cy="10" r="6.5" fill="none" stroke="#d4d4d4" stroke-width="2" stroke-dasharray="2 1.5"/><circle cx="11" cy="10" r="2" fill="#d4d4d4"/><path d="M11 3V17M5 6.5L17 13.5M5 13.5L17 6.5" stroke="#d4d4d4" stroke-width="1.2"/></svg>
<svg class="a" style="left:52px;top:483px;" width="22" height="20" viewBox="0 0 22 20"><path d="M3 10Q11 2 19 10Q11 18 3 10Z" fill="#d4d4d4" stroke="#333" stroke-width="1"/><circle cx="11" cy="10" r="3.5" fill="#333"/><circle cx="12" cy="9" r="1" fill="#d4d4d4"/></svg>
<div class="a" style="left:54px;top:508px;width:19px;height:2px;background:#666;"></div>
<svg class="a" style="left:52px;top:513px;" width="22" height="18" viewBox="0 0 22 18"><rect x="5" y="1" width="12" height="15" fill="#d4d4d4" stroke="#333" stroke-width="1"/><path d="M8 5H14M8 8H14M8 11H14" stroke="#333" stroke-width="1.3"/></svg>
<svg class="a" style="left:52px;top:536px;" width="22" height="18" viewBox="0 0 22 18"><rect x="5" y="1" width="12" height="15" fill="#d4d4d4"/></svg>
<svg class="a" style="left:52px;top:559px;" width="22" height="18" viewBox="0 0 22 18"><rect x="5.5" y="1.5" width="11" height="14" fill="none" stroke="#d4d4d4" stroke-width="1.4"/><path d="M8 5H13M8 8H14M8 11H12" stroke="#d4d4d4" stroke-width="1.2"/></svg>
<div class="a" style="left:54px;top:582px;width:19px;height:2px;background:#666;"></div>
<svg class="a" style="left:52px;top:587px;" width="22" height="18" viewBox="0 0 22 18"><path d="M4 2H18L13 9V16L10 13V9Z" fill="#6c6c6c"/><circle cx="15" cy="13" r="3" fill="none" stroke="#888" stroke-width="1.5" stroke-dasharray="1.5 1"/></svg>
<svg class="a" style="left:52px;top:610px;" width="22" height="18" viewBox="0 0 22 18"><path d="M4 2H18L13 9V16L10 13V9Z" fill="#d4d4d4"/></svg>
<svg class="a" style="left:52px;top:633px;" width="22" height="18" viewBox="0 0 22 18"><path d="M5 6H8V4H10V6H12V4H14V6H17V16H5Z" fill="none" stroke="#d4d4d4" stroke-width="1.3"/></svg>
<div class="a" style="left:18px;top:700px;width:19px;height:19px;background:#555;border-radius:3px"></div>
<svg class="a" style="left:18px;top:700px;" width="19" height="19" viewBox="0 0 19 19"><path d="M7 5L13 9.5L7 14Z" fill="#ddd"/></svg>
<div class="a" style="left:12px;top:730px;width:36px;height:44px;background:linear-gradient(#5a86c6,#3e80d6);border-radius:4px"></div>
<div class="a" style="left:15px;top:737px;width:15px;height:14px;background:linear-gradient(#6a7484,#5c6676);border:1px solid #2c3440;border-radius:2px"></div>
<div class="a" style="left:31px;top:737px;width:15px;height:14px;background:linear-gradient(#6a7484,#5c6676);border:1px solid #2c3440;border-radius:2px"></div>
<div class="a" style="left:15px;top:752px;width:15px;height:14px;background:linear-gradient(#6a7484,#5c6676);border:1px solid #2c3440;border-radius:2px"></div>
<div class="a" style="left:31px;top:752px;width:15px;height:14px;background:linear-gradient(#6a7484,#5c6676);border:1px solid #2c3440;border-radius:2px"></div>
<div class="a" style="left:48px;top:728px;width:38px;height:104px;background:#3e3e3e;"></div>
<div class="a" style="left:56px;top:750px;width:30px;height:23px;background:#3c3c3c;border:1px solid #5c5c5c;border-right:none"></div>
<div class="t" style="left:59px;top:751px;font-size:12px;color:#f2f200;font-family:'Liberation Sans',sans-serif;">默认</div>
<div class="a" style="left:8px;top:775px;width:78px;height:28px;background:#444;"></div>
<div class="a" style="left:8px;top:775px;width:40px;height:0px;background:#444;"></div>
<div class="a" style="left:18px;top:780px;width:15px;height:17px;background:#5c5c5c;border-radius:3px"></div>
<svg class="a" style="left:18px;top:780px;" width="15" height="17" viewBox="0 0 15 17"><path d="M9 4.5L5.5 8.5L9 12.5" stroke="#ddd" stroke-width="1.2" fill="none"/></svg>
<div class="a" style="left:34px;top:780px;width:52px;height:17px;background:#5a5a5a;border-radius:3px 0 0 3px"></div>
<div class="t" style="left:72px;top:779px;font-size:12px;color:#eee;font-family:'Liberation Sans',sans-serif;">0</div>
<div class="a" style="left:17px;top:801px;width:69px;height:2px;background:#111;"></div>
<div class="a" style="left:8px;top:803px;width:78px;height:29px;background:#444;"></div>
<div class="a" style="left:10px;top:782px;width:3px;height:44px;background-image:linear-gradient(#444 50%,transparent 50%),linear-gradient(90deg,#b4b4b4 1px,#444 1px,#444 2px,#b4b4b4 2px,#b4b4b4 3px);background-size:3px 2px,3px 2px"></div>
<svg class="a" style="left:30px;top:808px;" width="16" height="14" viewBox="0 0 16 14"><path d="M1 2H4M1 4.5H4M1 7H4M1 9.5H4M1 12H4" stroke="#ddd" stroke-width="1"/><path d="M5 12Q8 1 10 7T15 4" stroke="#3ec3c6" stroke-width="1.4" fill="none"/></svg>
<div class="a" style="left:67px;top:803px;width:12px;height:26px;background:#2a2a2a;"></div>
<div class="a" style="left:69px;top:805px;width:8px;height:22px;background:#a99c2c;"></div>
<div class="a" style="left:72px;top:804px;width:1px;height:24px;background:#d8d070;"></div>
<div class="t" style="left:70px;top:808px;font-size:9px;color:#f0eaa0;font-family:'Liberation Sans',sans-serif;"><span style="font-size:9px">0</span></div>
<div class="a" style="left:1287px;top:167px;width:122px;height:3px;background-image:linear-gradient(90deg,#444 50%,transparent 50%),linear-gradient(#b4b4b4 1px,#444 1px,#444 2px,#b4b4b4 2px,#b4b4b4 3px);background-size:2px 3px,2px 3px"></div>
<div class="a" style="left:1286px;top:174px;width:126px;height:658px;background:#444;"></div>
<div class="a" style="left:1266px;top:174px;width:31px;height:26px;background:#3b3b3b;border-radius:4px 4px 0 0"></div>
<div class="a" style="left:1298px;top:174px;width:31px;height:26px;background:#3b3b3b;border-radius:4px 4px 0 0"></div>
<div class="a" style="left:1330px;top:174px;width:31px;height:26px;background:#3b3b3b;border-radius:4px 4px 0 0"></div>
<div class="a" style="left:1362px;top:174px;width:31px;height:26px;background:#3b3b3b;border-radius:4px 4px 0 0"></div>
<svg class="a" style="left:1302px;top:176px;" width="24" height="22" viewBox="0 0 24 22"><path d="M8 5A7 6.5 0 0 0 8 17" stroke="#3ec3c6" stroke-width="1.1" fill="none"/><path d="M10.5 4.5A7 6.5 0 0 0 10.5 17.5" stroke="#3ec3c6" stroke-width="1.1" fill="none"/><circle cx="15.5" cy="11" r="6.5" fill="#999"/></svg>
<svg class="a" style="left:1286px;top:180px;" width="6" height="20" viewBox="0 0 6 20"><rect x="1" y="2" width="2" height="6" fill="#888"/><rect x="1" y="11" width="3" height="2" fill="#3ec3c6"/><rect x="1" y="16" width="3" height="3" fill="#3ec3c6"/></svg>
<svg class="a" style="left:1334px;top:176px;" width="24" height="22" viewBox="0 0 24 22"><rect x="4" y="4" width="16" height="10" fill="#aaa"/><path d="M8 17H16" stroke="#aaa" stroke-width="1.5"/></svg>
<svg class="a" style="left:1366px;top:176px;" width="24" height="22" viewBox="0 0 24 22"><circle cx="8" cy="7" r="4.8" fill="#bbb"/><path d="M8 7L4 3" stroke="#3b3b3b" stroke-width="3.2"/><path d="M9 8L18 17" stroke="#bbb" stroke-width="3.4" stroke-linecap="round"/><circle cx="17.3" cy="16.3" r="0.9" fill="#3b3b3b"/></svg>
<div class="a" style="left:1286px;top:200px;width:122px;height:574px;background:#444;border-radius:0 3px 0 0"></div>
<svg class="a" style="left:1286px;top:206px;" width="16" height="18" viewBox="0 0 16 18"><path d="M0 5L3 2V16L0 13Z" fill="#ccc"/></svg>
<svg class="a" style="left:1296px;top:206px;" width="20" height="20" viewBox="0 0 20 20"><path d="M3 3L17 17H3Z" fill="none" stroke="#ddd" stroke-width="2"/><path d="M3 10H5M3 13H5" stroke="#ddd"/></svg>
<svg class="a" style="left:1318px;top:206px;" width="20" height="20" viewBox="0 0 20 20"><path d="M2 6Q6 3 10 6T18 6M2 10Q6 7 10 10T18 10M2 14Q6 11 10 14T18 14" stroke="#ddd" stroke-width="1.5" fill="none"/></svg>
<svg class="a" style="left:1340px;top:206px;" width="20" height="20" viewBox="0 0 20 20"><circle cx="6" cy="6" r="3.6" fill="none" stroke="#ddd" stroke-width="2.2" stroke-dasharray="1.4 1.4"/><circle cx="6" cy="6" r="2.4" fill="none" stroke="#ddd" stroke-width="1.3"/><circle cx="13" cy="13" r="4.6" fill="none" stroke="#ddd" stroke-width="2.4" stroke-dasharray="1.8 1.8"/><circle cx="13" cy="13" r="3.2" fill="none" stroke="#ddd" stroke-width="1.6"/></svg>
<div class="a" style="left:1286px;top:233px;width:121px;height:20px;background:linear-gradient(90deg,#4d4d4d,#626262 40%,#626262)"></div>
<svg class="a" style="left:1393px;top:239px;" width="10" height="7" viewBox="0 0 10 7"><path d="M0 0H9L4.5 6Z" fill="#eee"/></svg>
<div class="a" style="left:1402px;top:258px;width:6px;height:512px;background:#3d3d3d;border-radius:3px"></div>
<div class="a" style="left:1266px;top:258px;width:133px;height:168px;background:#4f4f4f;border-radius:4px"></div>
<svg class="a" style="left:1384px;top:263px;" width="9" height="8" viewBox="0 0 9 8"><g fill="#999"><rect x="0" y="0" width="1.5" height="1.5"/><rect x="3" y="0" width="1.5" height="1.5"/><rect x="6" y="0" width="1.5" height="1.5"/><rect x="0" y="3" width="1.5" height="1.5"/><rect x="3" y="3" width="1.5" height="1.5"/><rect x="6" y="3" width="1.5" height="1.5"/><rect x="0" y="6" width="1.5" height="1.5"/><rect x="3" y="6" width="1.5" height="1.5"/><rect x="6" y="6" width="1.5" height="1.5"/></g></svg>
<div class="t" style="left:1273px;top:278px;font-size:12px;color:#9a9a9a;font-family:'Liberation Sans',sans-serif;">自动栅格</div>
<div class="a" style="left:1250px;top:299px;width:51px;height:16px;background:#5c5c5c;border-radius:3px"></div>
<div class="a" style="left:1306px;top:299px;width:78px;height:16px;background:#5c5c5c;border-radius:3px"></div>
<div class="t" style="left:1327px;top:297px;font-size:12px;color:#eee;font-family:'Liberation Sans',sans-serif;">圆锥体</div>
<div class="a" style="left:1250px;top:320px;width:51px;height:16px;background:#5c5c5c;border-radius:3px"></div>
<div class="a" style="left:1306px;top:320px;width:78px;height:16px;background:#5c5c5c;border-radius:3px"></div>
<div class="t" style="left:1321px;top:318px;font-size:12px;color:#eee;font-family:'Liberation Sans',sans-serif;">几何球体</div>
<div class="a" style="left:1250px;top:341px;width:51px;height:16px;background:#5c5c5c;border-radius:3px"></div>
<div class="a" style="left:1306px;top:341px;width:78px;height:16px;background:#5c5c5c;border-radius:3px"></div>
<div class="t" style="left:1327px;top:339px;font-size:12px;color:#eee;font-family:'Liberation Sans',sans-serif;">管状体</div>
<div class="a" style="left:1250px;top:362px;width:51px;height:16px;background:#5c5c5c;border-radius:3px"></div>
<div class="a" style="left:1306px;top:362px;width:78px;height:16px;background:#5c5c5c;border-radius:3px"></div>
<div class="t" style="left:1327px;top:360px;font-size:12px;color:#eee;font-family:'Liberation Sans',sans-serif;">四棱锥</div>
<div class="a" style="left:1250px;top:383px;width:51px;height:16px;background:#5c5c5c;border-radius:3px"></div>
<div class="a" style="left:1306px;top:383px;width:78px;height:16px;background:#5c5c5c;border-radius:3px"></div>
<div class="t" style="left:1333px;top:381px;font-size:12px;color:#eee;font-family:'Liberation Sans',sans-serif;">平面</div>
<div class="a" style="left:1250px;top:404px;width:51px;height:16px;background:#5c5c5c;border-radius:3px"></div>
<div class="t" style="left:1278px;top:402px;font-size:12px;color:#ccc;font-family:'Liberation Sans',sans-serif;">区</div>
<div class="a" style="left:1266px;top:430px;width:133px;height:56px;background:#4f4f4f;border-radius:4px"></div>
<svg class="a" style="left:1384px;top:435px;" width="9" height="8" viewBox="0 0 9 8"><g fill="#999"><rect x="0" y="0" width="1.5" height="1.5"/><rect x="3" y="0" width="1.5" height="1.5"/><rect x="6" y="0" width="1.5" height="1.5"/><rect x="0" y="3" width="1.5" height="1.5"/><rect x="3" y="3" width="1.5" height="1.5"/><rect x="6" y="3" width="1.5" height="1.5"/><rect x="0" y="6" width="1.5" height="1.5"/><rect x="3" y="6" width="1.5" height="1.5"/><rect x="6" y="6" width="1.5" height="1.5"/></g></svg>
<div class="t" style="left:1280px;top:430px;font-size:12px;color:#eee;font-family:'Liberation Sans',sans-serif;">色</div>
<div class="a" style="left:1266px;top:457px;width:93px;height:18px;background:linear-gradient(90deg,#4c4c4c,#5a5a5a 40%,#5a5a5a)"></div>
<div class="a" style="left:1363px;top:456px;width:17px;height:20px;background:#c4328a;border:1px solid #1a1a1a"></div>
<div class="a" style="left:1286px;top:774px;width:126px;height:28px;background:#474747;border-top:1px solid #3a3a3a"></div>
<div class="a" style="left:1286px;top:801px;width:126px;height:2px;background:#0c0c0c;"></div>
<div class="a" style="left:1286px;top:803px;width:76px;height:25px;background:#2c2c2c;"></div>
<div class="a" style="left:1292px;top:803px;width:1px;height:25px;background:#888;"></div>
<div class="a" style="left:1305px;top:803px;width:1px;height:12px;background:#888;"></div>
<div class="a" style="left:1318px;top:803px;width:1px;height:12px;background:#888;"></div>
<div class="a" style="left:1330px;top:803px;width:1px;height:12px;background:#888;"></div>
<div class="a" style="left:1343px;top:803px;width:1px;height:12px;background:#888;"></div>
<div class="a" style="left:1356px;top:803px;width:1px;height:25px;background:#888;"></div>
<div class="a" style="left:1362px;top:803px;width:50px;height:29px;background:#444;"></div>
<div class="t" style="left:1284px;top:810px;font-size:12px;color:#ddd;font-family:'Liberation Sans',sans-serif;letter-spacing:-0.5px">95</div>
<div class="t" style="left:1347px;top:810px;font-size:12px;color:#ddd;font-family:'Liberation Sans',sans-serif;letter-spacing:-0.5px">100</div>
<div class="a" style="left:8px;top:832px;width:1404px;height:52px;background:#444;"></div>
<div class="a" style="left:12px;top:833px;width:98px;height:22px;background:linear-gradient(90deg,#d9c5c7,#d8c4c6 60%,#ccb8ba);border-top:2px solid #8a8a8a;border-left:2px solid #8a8a8a;border-right:2px solid #f4f4f4;border-bottom:2px solid #f4f4f4"></div>
<div class="a" style="left:12px;top:856px;width:98px;height:25px;background:#fff;border-top:2px solid #8a8a8a;border-left:2px solid #8a8a8a;border-right:2px solid #eee;border-bottom:2px solid #eee"></div>
<div class="t" style="left:19px;top:857px;font-size:12px;color:#0000f0;font-family:'Liberation Sans',sans-serif;">“执行脚本完毕”</div>
<div class="a" style="left:113px;top:832px;width:2px;height:50px;background:#383838;"></div>
<div class="a" style="left:115px;top:832px;width:1px;height:50px;background:#111;"></div>
<div class="t" style="left:120px;top:836px;font-size:12px;color:#eee;font-family:'Liberation Sans',sans-serif;">未选定任何对象</div>
<div class="t" style="left:120px;top:860px;font-size:12px;color:#eee;font-family:'Liberation Sans',sans-serif;">单击或单击并拖动以选择对象</div>
<svg class="a" style="left:473px;top:836px;" width="20" height="18" viewBox="0 0 20 18"><path d="M2 6V2H6M14 2H18V6M18 12V16H14M6 16H2V12" stroke="#666" stroke-width="1.4" fill="none"/><rect x="6" y="5" width="8" height="8" stroke="#666" stroke-width="1.4" fill="none"/></svg>
<svg class="a" style="left:502px;top:836px;" width="16" height="18" viewBox="0 0 16 18"><rect x="2" y="8" width="12" height="9" rx="1" stroke="#666" stroke-width="1.4" fill="none"/><path d="M4.5 8V5A3.5 3.5 0 0 1 11.5 5V8" stroke="#666" stroke-width="1.4" fill="none"/><rect x="7" y="11" width="2" height="3" fill="#666"/></svg>
<svg class="a" style="left:528px;top:836px;" width="18" height="18" viewBox="0 0 18 18"><rect x="1.5" y="1.5" width="15" height="15" stroke="#ddd" stroke-width="1.5" fill="none"/><path d="M9 3L15 9L9 15L3 9Z" fill="#ddd"/><circle cx="9" cy="9" r="2.5" fill="#444"/></svg>
<div class="t" style="left:553px;top:835px;font-size:12px;color:#ccc;font-family:'Liberation Mono',monospace;letter-spacing:-1px">X:</div>
<div class="a" style="left:568px;top:837px;width:57px;height:17px;background:#555;"></div>
<div class="t" style="left:639px;top:835px;font-size:12px;color:#ccc;font-family:'Liberation Mono',monospace;letter-spacing:-1px">Y:</div>
<div class="a" style="left:654px;top:837px;width:57px;height:17px;background:#555;"></div>
<div class="t" style="left:725px;top:835px;font-size:12px;color:#ccc;font-family:'Liberation Mono',monospace;letter-spacing:-1px">Z:</div>
<div class="a" style="left:740px;top:837px;width:57px;height:17px;background:#555;"></div>
<div class="t" style="left:813px;top:835px;font-size:12px;color:#eee;font-family:'Liberation Sans',sans-serif;">栅格 = 10.0</div>
<div class="a" style="left:785px;top:859px;width:2px;height:21px;background:#111;"></div>
<div class="a" style="left:787px;top:860px;width:21px;height:20px;background:#5b8bcb;border-radius:3px"></div>
<svg class="a" style="left:787px;top:860px;" width="21" height="20" viewBox="0 0 21 20"><path d="M10.5 4L16 7V13L10.5 16L5 13V7Z" stroke="#ddd" stroke-width="1.2" fill="none"/><path d="M5 7L10.5 10L16 7M10.5 10V16" stroke="#ddd" stroke-width="1.2" fill="none"/></svg>
<div class="t" style="left:812px;top:860px;font-size:12px;color:#eee;font-family:'Liberation Sans',sans-serif;width:66px;overflow:hidden">添加时间标记</div>
<svg class="a" style="left:923px;top:837px;" width="20" height="16" viewBox="0 0 20 16"><path d="M3 3V13" stroke="#dcdcdc" stroke-width="1.6"/><path d="M11 3L5 8L11 13ZM17 3L11 8L17 13Z" fill="#dcdcdc"/></svg>
<div class="a" style="left:946px;top:836px;width:1px;height:18px;background:#111;"></div>
<svg class="a" style="left:949px;top:837px;" width="20" height="16" viewBox="0 0 20 16"><path d="M9 3L3 8L9 13Z" fill="#dcdcdc"/><path d="M11 3V13M15 3V13" stroke="#dcdcdc" stroke-width="1.8"/></svg>
<svg class="a" style="left:971px;top:835px;" width="22" height="20" viewBox="0 0 22 20"><path d="M5 2L17 9.5L5 17Z" fill="#dcdcdc"/><path d="M18 15V19H14Z" fill="#ddd"/></svg>
<svg class="a" style="left:994px;top:837px;" width="20" height="16" viewBox="0 0 20 16"><path d="M11 3L17 8L11 13Z" fill="#dcdcdc"/><path d="M3 3V13M7 3V13" stroke="#dcdcdc" stroke-width="1.8"/></svg>
<div class="a" style="left:1018px;top:836px;width:1px;height:18px;background:#111;"></div>
<svg class="a" style="left:1021px;top:837px;" width="20" height="16" viewBox="0 0 20 16"><path d="M17 3V13" stroke="#dcdcdc" stroke-width="1.6"/><path d="M3 3L9 8L3 13ZM9 3L15 8L9 13Z" fill="#dcdcdc"/></svg>
<svg class="a" style="left:925px;top:859px;" width="16" height="14" viewBox="0 0 16 14"><path d="M7 2L2 7L7 12ZM9 2L14 7L9 12Z" fill="#dcdcdc"/></svg>
<div class="a" style="left:946px;top:858px;width:1px;height:18px;background:#111;"></div>
<div class="a" style="left:949px;top:859px;width:68px;height:16px;background:#5a5a5a;"></div>
<div class="t" style="left:953px;top:857px;font-size:12px;color:#eee;font-family:'Liberation Sans',sans-serif;">0</div>
<svg class="a" style="left:1006px;top:860px;" width="10" height="14" viewBox="0 0 10 14"><path d="M2 5L5 2L8 5ZM2 9L5 12L8 9Z" fill="#ddd"/></svg>
<div class="a" style="left:1020px;top:858px;width:1px;height:18px;background:#111;"></div>
<svg class="a" style="left:1022px;top:857px;" width="20" height="20" viewBox="0 0 20 20"><circle cx="7" cy="8" r="5.5" fill="#ddd"/><path d="M7 4V8H10" stroke="#444" stroke-width="1.3" fill="none"/><circle cx="13.5" cy="14.5" r="4" fill="none" stroke="#f4b01c" stroke-width="2.2" stroke-dasharray="1.6 1.1"/><circle cx="13.5" cy="14.5" r="1.5" fill="#f4b01c"/></svg>
<div class="a" style="left:1054px;top:835px;width:40px;height:42px;background:#575757;border-radius:3px"></div>
<svg class="a" style="left:1058px;top:839px;" width="32" height="34" viewBox="0 0 32 34"><path d="M11 3H17V13H27V19H17V29H11V19H1V13H11Z" fill="#ddd" stroke="#444" stroke-width="1"/><circle cx="17" cy="25" r="4" fill="none" stroke="#3ec3c6" stroke-width="2.2"/><path d="M20 22L28 14M25 17L27 19M23 19L25 21" stroke="#3ec3c6" stroke-width="2.2"/></svg>
<div class="a" style="left:1099px;top:836px;width:64px;height:20px;background:#585858;border-radius:3px"></div>
<div class="t" style="left:1101px;top:836px;font-size:12px;color:#eee;font-family:'Liberation Sans',sans-serif;letter-spacing:-0.6px">自动关键点</div>
<div class="a" style="left:1099px;top:858px;width:64px;height:20px;background:#585858;border-radius:3px"></div>
<div class="t" style="left:1101px;top:858px;font-size:12px;color:#eee;font-family:'Liberation Sans',sans-serif;letter-spacing:-0.6px">设置关键点</div>
<div class="a" style="left:1169px;top:836px;width:111px;height:20px;background:#5c5c5c;"></div>
<div class="t" style="left:1173px;top:836px;font-size:12px;color:#eee;font-family:'Liberation Sans',sans-serif;">选定对象</div>
<svg class="a" style="left:1266px;top:843px;" width="7" height="5" viewBox="0 0 7 5"><path d="M0 0H7L3.5 4.5Z" fill="#e6e6e6"/></svg>
<svg class="a" style="left:1171px;top:857px;" width="20" height="20" viewBox="0 0 20 20"><rect x="8.2" y="1.8" width="3.6" height="3.6" fill="none" stroke="#ddd" stroke-width="1.1"/><path d="M5.5 5Q3.5 9 4.5 17M14.5 5Q16.5 9 15.5 17" stroke="#3ec3c6" stroke-width="2" fill="none"/><circle cx="5" cy="4" r="1.2" fill="#ddd"/><circle cx="15" cy="4" r="1.2" fill="#ddd"/><path d="M19 15V19H15Z" fill="#ddd"/></svg>
<div class="a" style="left:1195px;top:858px;width:85px;height:20px;background:#585858;border-radius:3px"></div>
<div class="t" style="left:1195px;top:858px;width:85px;overflow:hidden;font-size:13px;color:#eee;font-family:'Liberation Sans',sans-serif"><span style="margin-left:-6px">关键点过滤器...</span></div>
<svg class="a" style="left:1295px;top:836px;" width="20" height="20" viewBox="0 0 20 20"><circle cx="12" cy="8" r="5.5" stroke="#d4d4d4" stroke-width="1.8" fill="none"/><path d="M8 12L3 17" stroke="#d4d4d4" stroke-width="2"/></svg>
<svg class="a" style="left:1318px;top:836px;" width="20" height="20" viewBox="0 0 20 20"><rect x="10" y="2" width="4" height="4" fill="#3ec3c6"/><rect x="15" y="2" width="4" height="4" fill="#3ec3c6"/><rect x="15" y="7" width="4" height="4" fill="#3ec3c6"/><circle cx="9" cy="11" r="4" stroke="#d4d4d4" stroke-width="1.6" fill="none"/><circle cx="9" cy="11" r="2" fill="#3ec3c6"/><path d="M6 14L2 18" stroke="#d4d4d4" stroke-width="1.6"/></svg>
<svg class="a" style="left:1341px;top:836px;" width="20" height="20" viewBox="0 0 20 20"><path d="M2 6V2H6M14 2H18V6M18 14V18H14M6 18H2V14" stroke="#d4d4d4" stroke-width="1.5" fill="none"/><path d="M5 8L10 5.5L15 8V13L10 15.5L5 13Z" fill="#3ec3c6"/><path d="M5 8L10 10.5L15 8M10 10.5V15.5" stroke="#2a7a7a" stroke-width="1" fill="none"/></svg>
<svg class="a" style="left:1358px;top:853px;" width="4" height="4" viewBox="0 0 4 4"><path d="M4 0V4H0Z" fill="#ddd"/></svg>
<svg class="a" style="left:1364px;top:836px;" width="20" height="20" viewBox="0 0 20 20"><path d="M14 3A3 2 0 0 1 20 3V12A3 2 0 0 1 14 12Z" fill="#3ec3c6"/><path d="M4 12L7 10L10 12L7 14ZM9 15L12 13L15 15L12 17ZM9 10L12 8" fill="#d4d4d4"/></svg>
<svg class="a" style="left:1381px;top:853px;" width="4" height="4" viewBox="0 0 4 4"><path d="M4 0V4H0Z" fill="#ddd"/></svg>
<svg class="a" style="left:1295px;top:858px;" width="20" height="20" viewBox="0 0 20 20"><rect x="2" y="2" width="16" height="12" stroke="#d4d4d4" stroke-width="1.5" fill="none" stroke-dasharray="2.5 1.5"/><circle cx="10" cy="10" r="4" stroke="#3ec3c6" stroke-width="1.8" fill="none"/><path d="M7 13L2 18" stroke="#3ec3c6" stroke-width="2"/></svg>
<svg class="a" style="left:1319px;top:857px;" width="20" height="20" viewBox="0 0 20 20"><path d="M5 11V6A1 1 0 0 1 7 6V10V3A1 1 0 0 1 9 3V10V2A1 1 0 0 1 11 2V10V3A1 1 0 0 1 13 3V11V7A1 1 0 0 1 15 7V13Q15 19 10 19Q7 19 4 15L2 12A1 1 0 0 1 4 11Z" fill="#d4d4d4"/></svg>
<svg class="a" style="left:1335px;top:874px;" width="4" height="4" viewBox="0 0 4 4"><path d="M4 0V4H0Z" fill="#ddd"/></svg>
<svg class="a" style="left:1341px;top:857px;" width="20" height="20" viewBox="0 0 20 20"><path d="M3 10A7 7 0 0 1 10 3V10Z" fill="#3ec3c6"/><path d="M11 4A7 7 0 0 1 16 14L11 11Z" fill="#d4d4d4"/><ellipse cx="10" cy="12" rx="9" ry="3.5" transform="rotate(-30 10 12)" stroke="#d4d4d4" stroke-width="1.4" fill="none"/></svg>
<svg class="a" style="left:1358px;top:874px;" width="4" height="4" viewBox="0 0 4 4"><path d="M4 0V4H0Z" fill="#ddd"/></svg>
<svg class="a" style="left:1364px;top:857px;" width="20" height="20" viewBox="0 0 20 20"><rect x="2" y="2" width="16" height="16" fill="#d4d4d4"/><rect x="4" y="10" width="6" height="6" stroke="#333" stroke-width="1.3" fill="none"/><path d="M8 12L16 4M11 4H16V9" stroke="#333" stroke-width="1.5" fill="none"/></svg>
<svg class="a" style="left:1400px;top:872px;" width="10" height="10" viewBox="0 0 10 10"><g fill="#bbb"><rect x="7" y="1" width="2" height="2"/><rect x="4" y="4" width="2" height="2"/><rect x="7" y="4" width="2" height="2"/><rect x="1" y="7" width="2" height="2"/><rect x="4" y="7" width="2" height="2"/><rect x="7" y="7" width="2" height="2"/></g></svg>
<div class="a" style="left:86px;top:152px;width:1200px;height:680px;background:#3c3c3c;"></div>
<div class="a" style="left:86px;top:152px;width:1200px;height:30px;background:#fff;"></div>
<div class="a" style="left:86px;top:182px;width:1200px;height:1px;background:#2a2a2a;"></div>
<div class="a" style="left:94px;top:158px;width:16px;height:16px;background:#2b5cb6"></div>
<svg class="a" style="left:94px;top:158px;" width="16" height="16" viewBox="0 0 16 16"><circle cx="8.3" cy="8.6" r="5.3" fill="#fff"/><path d="M6.2 4.3H11.6L8 10Z" fill="#fff"/><path d="M4.6 4.8Q6.2 7 7.2 11.6L12 3.6" stroke="#2b5cb6" stroke-width="1.5" fill="none"/></svg>
<div class="t" style="left:115px;top:157px;font-size:13px;color:#000;font-family:'Liberation Sans',sans-serif;">V-Ray 帧缓冲区</div>
<div class="a" style="left:1167px;top:166px;width:10px;height:1px;background:#000;"></div>
<div class="a" style="left:1212px;top:161px;width:10px;height:10px;background:transparent;border:1px solid #000"></div>
<svg class="a" style="left:1257px;top:160px;" width="12" height="12" viewBox="0 0 12 12"><path d="M1 1L11 11M11 1L1 11" stroke="#000" stroke-width="1.1"/></svg>
<div class="a" style="left:92px;top:185px;width:34px;height:20px;background:#333;"></div>
<div class="t" style="left:96px;top:185px;font-size:13px;color:#4aa9dc;font-family:'Liberation Sans',sans-serif;"><b>历史</b></div>
<div class="a" style="left:92px;top:205px;width:148px;height:624px;background:#2f2f2f;"></div>
<svg class="a" style="left:100px;top:214px;" width="24" height="20" viewBox="0 0 24 20"><path d="M4 5V2H20V5M4 9V14H20V9" stroke="#5e5e5e" stroke-width="1.6" fill="none"/><path d="M12 4V11M8.5 7.5H15.5" stroke="#5e5e5e" stroke-width="1.6"/><path d="M3 17H21" stroke="#3c3c3c" stroke-width="1.4"/></svg>
<svg class="a" style="left:136px;top:214px;" width="24" height="22" viewBox="0 0 24 22"><path d="M6 2V20M18 2V20" stroke="#3a3a3a" stroke-width="1.2"/><path d="M12 3V19" stroke="#5e5e5e" stroke-width="1.6"/><text x="4.5" y="14" font-family="Liberation Sans" font-size="8" fill="#5e5e5e">A</text><text x="13.5" y="14" font-family="Liberation Sans" font-size="8" fill="#5e5e5e">B</text></svg>
<svg class="a" style="left:171px;top:214px;" width="24" height="20" viewBox="0 0 24 20"><path d="M4 5V2H20V5M4 9V14H20V9" stroke="#5e5e5e" stroke-width="1.6" fill="none"/><path d="M8 7L11 10L16 4" stroke="#5e5e5e" stroke-width="1.6" fill="none"/><path d="M3 17H21" stroke="#3c3c3c" stroke-width="1.4"/></svg>
<svg class="a" style="left:206px;top:214px;" width="24" height="20" viewBox="0 0 24 20"><path d="M4 5V2H20V5M4 9V14H20V9" stroke="#5e5e5e" stroke-width="1.6" fill="none"/><path d="M9 4L15 10M15 4L9 10" stroke="#5e5e5e" stroke-width="1.4"/><path d="M3 17H21" stroke="#3c3c3c" stroke-width="1.4"/></svg>
<svg class="a" style="left:160px;top:238px;" width="4" height="4" viewBox="0 0 4 4"><path d="M4 0V4H0Z" fill="#8a8a8a"/></svg>
<div class="a" style="left:95px;top:243px;width:142px;height:18px;background:#3b3b3b;border:1px solid #0a0a0a;border-radius:3px"></div>
<div class="t" style="left:100px;top:242px;font-size:12px;color:#8e8e8e;font-family:'Liberation Sans',sans-serif;">搜索过滤器</div>
<div class="a" style="left:219px;top:244px;width:1px;height:16px;background:#333;"></div>
<svg class="a" style="left:205px;top:245px;" width="14" height="14" viewBox="0 0 14 14"><circle cx="5.5" cy="5.5" r="4" stroke="#eee" stroke-width="1.5" fill="none"/><path d="M8.5 8.5L12.5 12.5" stroke="#eee" stroke-width="1.8"/></svg>
<svg class="a" style="left:224px;top:250px;" width="8" height="5" viewBox="0 0 8 5"><path d="M0 0H7L3.5 4Z" fill="#5fb6e0"/></svg>
<div class="a" style="left:229px;top:263px;width:7px;height:11px;background:#8a8a8a;border-radius:3px"></div>
<svg class="a" style="left:229px;top:263px;" width="7" height="11" viewBox="0 0 7 11"><path d="M1 7H6L3.5 4Z" fill="#111"/></svg>
<div class="a" style="left:229px;top:277px;width:7px;height:530px;background:#8a8a8a;border-radius:3px"></div>
<div class="a" style="left:229px;top:810px;width:7px;height:12px;background:#8a8a8a;border-radius:3px"></div>
<svg class="a" style="left:229px;top:810px;" width="7" height="12" viewBox="0 0 7 12"><path d="M1 5H6L3.5 8Z" fill="#111"/></svg>
<div class="a" style="left:246px;top:183px;width:2px;height:649px;background:#323232;"></div>
<div class="a" style="left:248px;top:183px;width:2px;height:649px;background:#3e3e3e;"></div>
<div class="a" style="left:247px;top:493px;width:4px;height:1px;background:#8a8a8a;"></div>
<div class="a" style="left:247px;top:495px;width:4px;height:1px;background:#8a8a8a;"></div>
<div class="a" style="left:247px;top:497px;width:4px;height:1px;background:#8a8a8a;"></div>
<div class="a" style="left:247px;top:499px;width:4px;height:1px;background:#8a8a8a;"></div>
<div class="a" style="left:247px;top:501px;width:4px;height:1px;background:#8a8a8a;"></div>
<div class="a" style="left:247px;top:503px;width:4px;height:1px;background:#8a8a8a;"></div>
<div class="a" style="left:247px;top:505px;width:4px;height:1px;background:#8a8a8a;"></div>
<div class="a" style="left:247px;top:507px;width:4px;height:1px;background:#8a8a8a;"></div>
<div class="a" style="left:247px;top:509px;width:4px;height:1px;background:#8a8a8a;"></div>
<div class="a" style="left:247px;top:511px;width:4px;height:1px;background:#8a8a8a;"></div>
<div class="a" style="left:247px;top:513px;width:4px;height:1px;background:#8a8a8a;"></div>
<div class="a" style="left:247px;top:515px;width:4px;height:1px;background:#8a8a8a;"></div>
<div class="a" style="left:247px;top:517px;width:4px;height:1px;background:#8a8a8a;"></div>
<div class="a" style="left:247px;top:519px;width:4px;height:1px;background:#8a8a8a;"></div>
<div class="a" style="left:250px;top:183px;width:716px;height:649px;background:#303030;"></div>
<div class="a" style="left:252px;top:205px;width:714px;height:1px;background:#000;"></div>
<div class="a" style="left:252px;top:206px;width:714px;height:1px;background:#1c1c1c;"></div>
<div class="t" style="left:257px;top:183px;font-size:12px;color:#eee;font-family:'Liberation Sans',sans-serif;">文件</div>
<div class="t" style="left:293px;top:183px;font-size:12px;color:#eee;font-family:'Liberation Sans',sans-serif;">渲染</div>
<div class="t" style="left:329px;top:183px;font-size:12px;color:#eee;font-family:'Liberation Sans',sans-serif;">图像</div>
<div class="t" style="left:365px;top:183px;font-size:12px;color:#eee;font-family:'Liberation Sans',sans-serif;">视图</div>
<div class="t" style="left:401px;top:183px;font-size:12px;color:#eee;font-family:'Liberation Sans',sans-serif;">选项</div>
<div class="t" style="left:886px;top:184px;font-size:12px;color:#ddd;font-family:'Liberation Sans',sans-serif;">新版本可用!</div>
<div class="a" style="left:252px;top:213px;width:181px;height:20px;background:#3c3c3c;border:1px solid #0a0a0a;border-radius:3px"></div>
<svg class="a" style="left:420px;top:221px;" width="8" height="5" viewBox="0 0 8 5"><path d="M0 0H7L3.5 4Z" fill="#5fb6e0"/></svg>
<div class="a" style="left:434px;top:207px;width:33px;height:33px;background:#37434c;border-radius:2px"></div>
<div class="a" style="left:444px;top:217px;width:13px;height:13px;border-radius:50%;background:#f07676"></div>
<div class="a" style="left:469px;top:207px;width:33px;height:33px;background:#37434c;border-radius:2px"></div>
<div class="a" style="left:479px;top:217px;width:13px;height:13px;border-radius:50%;background:#6ad46e"></div>
<div class="a" style="left:504px;top:207px;width:33px;height:33px;background:#37434c;border-radius:2px"></div>
<div class="a" style="left:514px;top:217px;width:13px;height:13px;border-radius:50%;background:#6ec8f8"></div>
<svg class="a" style="left:547px;top:215px;" width="16" height="16" viewBox="0 0 16 16"><circle cx="8" cy="8" r="6.5" fill="#fff"/><path d="M8 8V1.5A6.5 6.5 0 0 1 14.5 8Z M8 8V14.5A6.5 6.5 0 0 1 1.5 8Z" fill="#777"/></svg>
<svg class="a" style="left:655px;top:211px;" width="24" height="24" viewBox="0 0 24 24"><path d="M2 2H17L22 7V22H2Z" stroke="#e8e8e8" stroke-width="1.6" fill="none"/><path d="M6 2V8H16V2M12 3.5V6.5M6 22V13H18V22" stroke="#e8e8e8" stroke-width="1.6" fill="none"/></svg>
<svg class="a" style="left:679px;top:235px;" width="4" height="4" viewBox="0 0 4 4"><path d="M4 0V4H0Z" fill="#bbb"/></svg>
<svg class="a" style="left:690px;top:211px;" width="24" height="24" viewBox="0 0 24 24"><path d="M2 2H15L22 9V22H2Z" stroke="#bbb" stroke-width="1.6" fill="none"/><path d="M15 2V9H22" stroke="#bbb" stroke-width="1.4" fill="none"/><path d="M7 10L15 18M15 10L7 18" stroke="#f07676" stroke-width="2.4"/></svg>
<svg class="a" style="left:725px;top:211px;" width="24" height="24" viewBox="0 0 24 24"><path d="M2 2H17M2 2V17M2 7H12M7 2V12" stroke="#5fb6e0" stroke-width="2" stroke-dasharray="2 2" fill="none"/><path d="M10 9L21 16L16 17L19 22L17 23L14 18L10 21Z" fill="#f4f4f4"/></svg>
<svg class="a" style="left:760px;top:211px;" width="24" height="24" viewBox="0 0 24 24"><path d="M3 2H21M3 22H21" stroke="#3a3a3a" stroke-width="1.5"/><text x="2" y="16" font-family="Liberation Mono" font-size="9" fill="#666">50%</text></svg>
<svg class="a" style="left:784px;top:235px;" width="4" height="4" viewBox="0 0 4 4"><path d="M4 0V4H0Z" fill="#bbb"/></svg>
<svg class="a" style="left:795px;top:211px;" width="24" height="24" viewBox="0 0 24 24"><rect x="2" y="2" width="20" height="20" stroke="#bbb" stroke-width="1.8" fill="none"/><rect x="6" y="10" width="12" height="8" stroke="#5fb6e0" stroke-width="1.8" fill="none"/></svg>
<svg class="a" style="left:831px;top:211px;" width="24" height="24" viewBox="0 0 24 24"><path d="M3 6L12 2L21 6V16L12 22L3 16Z" stroke="#444" stroke-width="1.6" fill="none"/><path d="M11 10L20 15L16 16L18 21L13 17Z" fill="#5a5a5a"/></svg>
<svg class="a" style="left:855px;top:235px;" width="4" height="4" viewBox="0 0 4 4"><path d="M4 0V4H0Z" fill="#bbb"/></svg>
<svg class="a" style="left:865px;top:211px;" width="24" height="24" viewBox="0 0 24 24"><path d="M3 8H20L22 12Q22 22 12 22Q4 22 4 14" stroke="#e8e8e8" stroke-width="1.6" fill="none"/><path d="M4 10L1 7M20 9L23 6" stroke="#e8e8e8" stroke-width="1.6"/><rect x="9" y="4" width="6" height="3" rx="1.5" stroke="#e8e8e8" stroke-width="1.4" fill="none"/><path d="M12 13L21 18L12 23Z" fill="#5ad45e"/></svg>
<svg class="a" style="left:889px;top:235px;" width="4" height="4" viewBox="0 0 4 4"><path d="M4 0V4H0Z" fill="#bbb"/></svg>
<svg class="a" style="left:900px;top:211px;" width="24" height="24" viewBox="0 0 24 24"><path d="M3 8H20L22 12Q22 22 12 22Q4 22 4 14" stroke="#555" stroke-width="1.6" fill="none"/><rect x="9" y="4" width="6" height="3" rx="1.5" stroke="#555" stroke-width="1.4" fill="none"/><rect x="13" y="15" width="8" height="8" fill="#3c3c3c"/></svg>
<svg class="a" style="left:935px;top:211px;" width="24" height="24" viewBox="0 0 24 24"><path d="M4 8H20L21 11Q22 22 12 22Q2 22 3 11Z" stroke="#e8e8e8" stroke-width="1.6" fill="none"/><path d="M4 10L1 7M20 9L23 6" stroke="#e8e8e8" stroke-width="1.6"/><rect x="9" y="3.5" width="6" height="3.5" rx="1.5" stroke="#e8e8e8" stroke-width="1.4" fill="none"/></svg>
<svg class="a" style="left:959px;top:235px;" width="4" height="4" viewBox="0 0 4 4"><path d="M4 0V4H0Z" fill="#bbb"/></svg>
<svg class="a" style="left:258px;top:809px;" width="16" height="15" viewBox="0 0 16 15"><path d="M2 1V14M1 13H15" stroke="#ddd" stroke-width="1.3"/><rect x="6" y="6" width="8" height="6" fill="#eee"/><path d="M7.5 6V4A2.5 2.5 0 0 1 12.5 4V6" stroke="#eee" stroke-width="1.3" fill="none"/><circle cx="2" cy="13" r="1.8" fill="#fff"/></svg>
<div class="t" style="left:285px;top:807px;font-size:12px;color:#aaa;font-family:'Liberation Mono',monospace;letter-spacing:-1px">[0,&nbsp;&nbsp;0]</div>
<div class="a" style="left:373px;top:805px;width:1px;height:25px;background:#8a8a8a;"></div>
<div class="a" style="left:379px;top:808px;width:40px;height:18px;background:#393939;border:1px solid #0c0c0c;border-radius:3px"></div>
<div class="t" style="left:383px;top:807px;font-size:12px;color:#ddd;font-family:'Liberation Mono',monospace;letter-spacing:-1.5px">1x1</div>
<svg class="a" style="left:406px;top:815px;" width="8" height="5" viewBox="0 0 8 5"><path d="M0 0H7L3.5 4Z" fill="#5fb6e0"/></svg>
<div class="a" style="left:424px;top:805px;width:1px;height:25px;background:#8a8a8a;"></div>
<svg class="a" style="left:433px;top:809px;" width="16" height="15" viewBox="0 0 16 15"><path d="M2 1V14M1 13H15" stroke="#ddd" stroke-width="1.3"/><path d="M3 12Q5 3 12 3" stroke="#ddd" stroke-width="1.2" fill="none"/><circle cx="2" cy="13" r="1.8" fill="#fff"/></svg>
<div class="t" style="left:459px;top:807px;font-size:11px;color:#9a9a9a;font-family:'Liberation Mono',monospace;letter-spacing:-1px"><b>Raw</b></div>
<div class="a" style="left:486px;top:810px;width:14px;height:14px;background:#8a8a8a;border-radius:2px"></div>
<div class="t" style="left:511px;top:807px;font-size:12px;color:#9a9a9a;font-family:'Liberation Mono',monospace;letter-spacing:-1.2px">0.000</div>
<div class="t" style="left:557px;top:807px;font-size:12px;color:#9a9a9a;font-family:'Liberation Mono',monospace;letter-spacing:-1.2px">0.000</div>
<div class="t" style="left:604px;top:807px;font-size:12px;color:#9a9a9a;font-family:'Liberation Mono',monospace;letter-spacing:-1.2px">0.000</div>
<div class="a" style="left:646px;top:805px;width:1px;height:25px;background:#8a8a8a;"></div>
<div class="a" style="left:652px;top:808px;width:46px;height:18px;background:#393939;border:1px solid #0c0c0c;border-radius:3px"></div>
<div class="t" style="left:656px;top:807px;font-size:12px;color:#ddd;font-family:'Liberation Mono',monospace;letter-spacing:-1.5px">HSV</div>
<svg class="a" style="left:685px;top:815px;" width="8" height="5" viewBox="0 0 8 5"><path d="M0 0H7L3.5 4Z" fill="#5fb6e0"/></svg>
<div class="t" style="left:717px;top:807px;font-size:12px;color:#9a9a9a;font-family:'Liberation Mono',monospace;">0</div>
<div class="t" style="left:753px;top:807px;font-size:12px;color:#9a9a9a;font-family:'Liberation Mono',monospace;letter-spacing:-1.2px">0.0</div>
<div class="t" style="left:793px;top:807px;font-size:12px;color:#9a9a9a;font-family:'Liberation Mono',monospace;letter-spacing:-1.2px">0.0</div>
<div class="a" style="left:827px;top:805px;width:1px;height:25px;background:#8a8a8a;"></div>
<svg class="a" style="left:944px;top:809px;" width="16" height="15" viewBox="0 0 16 15"><rect x="1" y="1" width="14" height="13" stroke="#ddd" stroke-width="1.2" fill="none"/><path d="M3 4H11" stroke="#5fb6e0" stroke-width="1.6"/><path d="M3 7.5H9M3 11H12" stroke="#eee" stroke-width="1.6"/></svg>
<div class="a" style="left:966px;top:183px;width:3px;height:649px;background:#404040;"></div>
<div class="a" style="left:969px;top:183px;width:2px;height:649px;background:#303030;"></div>
<div class="a" style="left:971px;top:183px;width:6px;height:649px;background:#424242;"></div>
<div class="a" style="left:966px;top:493px;width:4px;height:1px;background:#8a8a8a;"></div>
<div class="a" style="left:966px;top:495px;width:4px;height:1px;background:#8a8a8a;"></div>
<div class="a" style="left:966px;top:497px;width:4px;height:1px;background:#8a8a8a;"></div>
<div class="a" style="left:966px;top:499px;width:4px;height:1px;background:#8a8a8a;"></div>
<div class="a" style="left:966px;top:501px;width:4px;height:1px;background:#8a8a8a;"></div>
<div class="a" style="left:966px;top:503px;width:4px;height:1px;background:#8a8a8a;"></div>
<div class="a" style="left:966px;top:505px;width:4px;height:1px;background:#8a8a8a;"></div>
<div class="a" style="left:966px;top:507px;width:4px;height:1px;background:#8a8a8a;"></div>
<div class="a" style="left:966px;top:509px;width:4px;height:1px;background:#8a8a8a;"></div>
<div class="a" style="left:966px;top:511px;width:4px;height:1px;background:#8a8a8a;"></div>
<div class="a" style="left:966px;top:513px;width:4px;height:1px;background:#8a8a8a;"></div>
<div class="a" style="left:966px;top:515px;width:4px;height:1px;background:#8a8a8a;"></div>
<div class="a" style="left:966px;top:517px;width:4px;height:1px;background:#8a8a8a;"></div>
<div class="a" style="left:966px;top:519px;width:4px;height:1px;background:#8a8a8a;"></div>
<div class="a" style="left:977px;top:183px;width:305px;height:649px;background:#3c3c3c;"></div>
<div class="a" style="left:977px;top:205px;width:303px;height:624px;background:#2f2f2f;"></div>
<div class="a" style="left:977px;top:185px;width:34px;height:20px;background:#333;"></div>
<div class="a" style="left:1014px;top:185px;width:33px;height:20px;background:#333;"></div>
<div class="a" style="left:1051px;top:185px;width:88px;height:20px;background:#333;"></div>
<div class="a" style="left:1142px;top:185px;width:34px;height:20px;background:#333;"></div>
<div class="t" style="left:981px;top:185px;font-size:13px;color:#4aa9dc;font-family:'Liberation Sans',sans-serif;"><b>图层</b></div>
<div class="t" style="left:1018px;top:185px;font-size:13px;color:#d8d8d8;font-family:'Liberation Sans',sans-serif;"><b>统计</b></div>
<div class="t" style="left:1055px;top:185px;font-size:13px;color:#d8d8d8;font-family:'Liberation Sans',sans-serif;letter-spacing:-0.3px"><b>日志[TZ汉化]</b></div>
<div class="t" style="left:1146px;top:185px;font-size:13px;color:#d8d8d8;font-family:'Liberation Sans',sans-serif;"><b>协作</b></div>
<svg class="a" style="left:985px;top:212px;" width="24" height="24" viewBox="0 0 24 24"><path d="M3 13L8 11M16 11L21 14L13 18L3 14" stroke="#f0f0f0" stroke-width="1.6" fill="none"/><path d="M3 17L13 21L21 17" stroke="#999" stroke-width="1.6" fill="none"/><path d="M12 3V12M7.5 7.5H16.5" stroke="#5ad45e" stroke-width="2.4"/></svg>
<svg class="a" style="left:1009px;top:236px;" width="4" height="4" viewBox="0 0 4 4"><path d="M4 0V4H0Z" fill="#ccc"/></svg>
<svg class="a" style="left:1020px;top:212px;" width="24" height="24" viewBox="0 0 24 24"><path d="M3 13L8 11M16 11L21 14L13 18L3 14" stroke="#666" stroke-width="1.6" fill="none"/><path d="M3 17L13 21L21 17" stroke="#555" stroke-width="1.6" fill="none"/><path d="M9 4L15 10M15 4L9 10" stroke="#777" stroke-width="1.8"/></svg>
<svg class="a" style="left:1055px;top:212px;" width="24" height="24" viewBox="0 0 24 24"><path d="M3 13L8 11M16 11L21 14L13 18L3 14" stroke="#f0f0f0" stroke-width="1.6" fill="none"/><path d="M3 17L13 21L21 17" stroke="#f0f0f0" stroke-width="1.6" fill="none"/><path d="M8 3H15L17 5V11H8Z" stroke="#5fb6e0" stroke-width="1.4" fill="none"/><rect x="10" y="3" width="4" height="3" fill="#5fb6e0"/></svg>
<svg class="a" style="left:1090px;top:212px;" width="24" height="24" viewBox="0 0 24 24"><path d="M3 13L8 11M16 11L21 14L13 18L3 14" stroke="#f0f0f0" stroke-width="1.6" fill="none"/><path d="M3 17L13 21L21 17" stroke="#f0f0f0" stroke-width="1.6" fill="none"/><path d="M8 4H12L13 5H18V11H8Z" fill="#5fb6e0"/></svg>
<svg class="a" style="left:1125px;top:212px;" width="24" height="24" viewBox="0 0 24 24"><g fill="#f0f0f0"><circle cx="4" cy="6" r="1.6"/><circle cx="4" cy="12" r="1.6"/><circle cx="4" cy="18" r="1.6"/></g><path d="M8 6H21M8 12H21M8 18H21" stroke="#f0f0f0" stroke-width="2"/></svg>
<svg class="a" style="left:1150px;top:236px;" width="4" height="4" viewBox="0 0 4 4"><path d="M4 0V4H0Z" fill="#ccc"/></svg>
<svg class="a" style="left:1161px;top:213px;" width="24" height="24" viewBox="0 0 24 24"><path d="M6 10A7 7 0 0 1 19 13" stroke="#555" stroke-width="1.8" fill="none"/><path d="M3 7V13H9" fill="#555"/><path d="M2.5 9.5L6.5 13.5L9 9Z" fill="#555"/></svg>
<svg class="a" style="left:1195px;top:213px;" width="24" height="24" viewBox="0 0 24 24"><g transform="translate(24,0) scale(-1,1)"><path d="M6 10A7 7 0 0 1 19 13" stroke="#555" stroke-width="1.8" fill="none"/><path d="M2.5 9.5L6.5 13.5L9 9Z" fill="#555"/></g></svg>
<div class="a" style="left:980px;top:243px;width:296px;height:20px;background:#383838;"></div>
<svg class="a" style="left:985px;top:248px;" width="12" height="10" viewBox="0 0 12 10"><path d="M2 9L10 1" stroke="#4a4a4a" stroke-width="1.2"/></svg>
<div class="a" style="left:1007px;top:245px;width:16px;height:16px;background:transparent;border:1px solid #555"></div>
<svg class="a" style="left:1007px;top:245px;" width="16" height="16" viewBox="0 0 16 16"><circle cx="8" cy="8" r="1" fill="#666"/></svg>
<div class="t" style="left:1028px;top:243px;font-size:12px;color:#8c8c8c;font-family:'Liberation Sans',sans-serif;">戳记</div>
<div class="a" style="left:980px;top:264px;width:296px;height:20px;background:#383838;"></div>
<svg class="a" style="left:984px;top:268px;" width="14" height="12" viewBox="0 0 14 12"><path d="M1 6Q7 0 13 6Q7 12 1 6Z" stroke="#aaa" stroke-width="1.2" fill="none"/><circle cx="7" cy="6" r="2.2" fill="#aaa"/></svg>
<div class="a" style="left:1007px;top:266px;width:16px;height:16px;background:#2e2e2e;border:1px solid #f0f0f0"></div>
<svg class="a" style="left:1007px;top:266px;" width="16" height="16" viewBox="0 0 16 16"><path d="M3 14Q4 4 14 3" stroke="#f0f0f0" stroke-width="1.2" fill="none"/></svg>
<div class="t" style="left:1028px;top:264px;font-size:12px;color:#e6e6e6;font-family:'Liberation Sans',sans-serif;">显示校正</div>
<div class="a" style="left:980px;top:285px;width:296px;height:20px;background:#383838;"></div>
<svg class="a" style="left:985px;top:290px;" width="12" height="10" viewBox="0 0 12 10"><path d="M2 9L10 1" stroke="#4a4a4a" stroke-width="1.2"/></svg>
<div class="a" style="left:1027px;top:287px;width:16px;height:16px;background:transparent;border:1px solid #555"></div>
<svg class="a" style="left:1027px;top:287px;" width="16" height="16" viewBox="0 0 16 16"><circle cx="8" cy="8" r="1" fill="#666"/></svg>
<div class="t" style="left:1048px;top:285px;font-size:12px;color:#8c8c8c;font-family:'Liberation Sans',sans-serif;">镜头效果</div>
<div class="a" style="left:980px;top:306px;width:296px;height:20px;background:#383838;"></div>
<svg class="a" style="left:985px;top:311px;" width="12" height="10" viewBox="0 0 12 10"><path d="M2 9L10 1" stroke="#4a4a4a" stroke-width="1.2"/></svg>
<div class="a" style="left:1027px;top:308px;width:16px;height:16px;background:transparent;border:1px solid #555"></div>
<svg class="a" style="left:1027px;top:308px;" width="16" height="16" viewBox="0 0 16 16"><circle cx="8" cy="8" r="1" fill="#666"/></svg>
<div class="t" style="left:1048px;top:306px;font-size:12px;color:#8c8c8c;font-family:'Liberation Sans',sans-serif;">锐化/模糊</div>
<div class="a" style="left:980px;top:327px;width:296px;height:20px;background:#383838;"></div>
<svg class="a" style="left:985px;top:332px;" width="12" height="10" viewBox="0 0 12 10"><path d="M2 9L10 1" stroke="#4a4a4a" stroke-width="1.2"/></svg>
<div class="a" style="left:1027px;top:329px;width:16px;height:16px;background:transparent;border:1px solid #555"></div>
<svg class="a" style="left:1027px;top:329px;" width="16" height="16" viewBox="0 0 16 16"><circle cx="8" cy="8" r="1" fill="#666"/></svg>
<div class="t" style="left:1048px;top:327px;font-size:12px;color:#8c8c8c;font-family:'Liberation Sans',sans-serif;">降噪:&nbsp;不可用</div>
<div class="a" style="left:980px;top:348px;width:296px;height:20px;background:#383838;"></div>
<svg class="a" style="left:984px;top:352px;" width="14" height="12" viewBox="0 0 14 12"><path d="M1 6Q7 0 13 6Q7 12 1 6Z" stroke="#aaa" stroke-width="1.2" fill="none"/><circle cx="7" cy="6" r="2.2" fill="#aaa"/></svg>
<div class="a" style="left:1027px;top:350px;width:16px;height:16px;background:#2e2e2e;border:1px solid #5fb6e0"></div>
<svg class="a" style="left:1027px;top:350px;" width="16" height="16" viewBox="0 0 16 16"><circle cx="8.5" cy="6" r="3.3" fill="#6ec8f8"/><circle cx="5.5" cy="10.5" r="3.3" fill="#f07676"/><circle cx="11" cy="10.5" r="3.3" fill="#6ad46e"/></svg>
<div class="t" style="left:1048px;top:348px;font-size:12px;color:#e6e6e6;font-family:'Liberation Sans',sans-serif;">来源:&nbsp;<span style="font-family:Liberation Mono;letter-spacing:-1px">RGB</span></div>
<div class="a" style="left:980px;top:515px;width:296px;height:2px;background:#3a3a3a;"></div>
<div class="a" style="left:1114px;top:515px;width:1px;height:3px;background:#888;"></div>
<div class="a" style="left:1116px;top:515px;width:1px;height:3px;background:#888;"></div>
<div class="a" style="left:1118px;top:515px;width:1px;height:3px;background:#888;"></div>
<div class="a" style="left:1120px;top:515px;width:1px;height:3px;background:#888;"></div>
<div class="a" style="left:1122px;top:515px;width:1px;height:3px;background:#888;"></div>
<div class="a" style="left:1124px;top:515px;width:1px;height:3px;background:#888;"></div>
<div class="a" style="left:1126px;top:515px;width:1px;height:3px;background:#888;"></div>
<div class="a" style="left:1128px;top:515px;width:1px;height:3px;background:#888;"></div>
<div class="a" style="left:1130px;top:515px;width:1px;height:3px;background:#888;"></div>
<div class="a" style="left:1132px;top:515px;width:1px;height:3px;background:#888;"></div>
<div class="a" style="left:1134px;top:515px;width:1px;height:3px;background:#888;"></div>
<div class="a" style="left:1136px;top:515px;width:1px;height:3px;background:#888;"></div>
<div class="a" style="left:1138px;top:515px;width:1px;height:3px;background:#888;"></div>
<div class="a" style="left:1140px;top:515px;width:1px;height:3px;background:#888;"></div>
<div class="a" style="left:980px;top:517px;width:296px;height:312px;background:#2f2f2f;"></div>
<div class="t" style="left:984px;top:518px;font-size:12px;color:#4aa9dc;font-family:'Liberation Sans',sans-serif;"><b>属性</b></div>
<div class="a" style="left:1014px;top:519px;width:262px;height:20px;background:#3c3c3c;"></div>
</body></html>
